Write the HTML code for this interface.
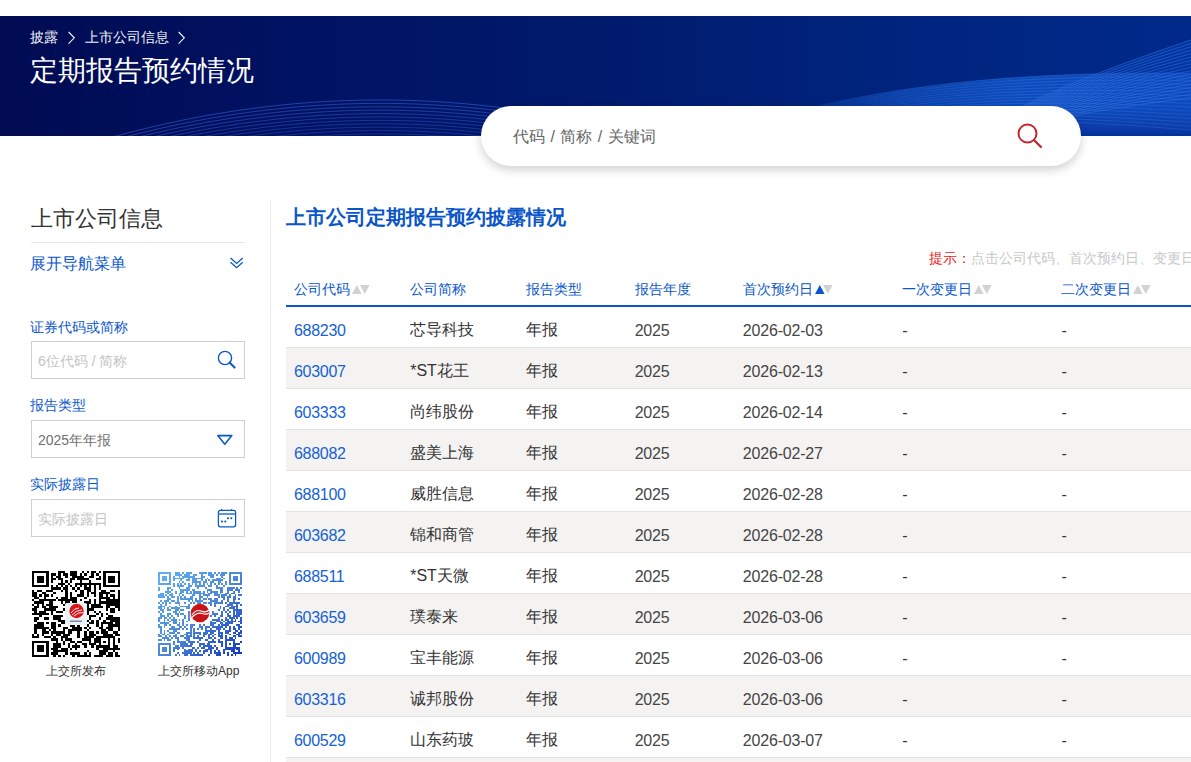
<!DOCTYPE html>
<html><head><meta charset="utf-8">
<style>
*{margin:0;padding:0;box-sizing:border-box}
html,body{width:1191px;height:762px;overflow:hidden;background:#fff}
body{font-family:"Liberation Sans",sans-serif;position:relative;color:#333}
.abs{position:absolute;white-space:nowrap}
#banner{position:absolute;left:0;top:16px;width:1191px;height:120px;overflow:hidden;
 background:linear-gradient(90deg,#000b52 0%,#001262 25%,#001a6c 50%,#00247e 75%,#00298a 100%)}
#banner svg{position:absolute;left:0;top:0}
.bc{color:#f0f0f5;font-size:14px;top:11px;left:30px;line-height:20px}
.ttl{color:#fff;font-size:28px;top:37px;left:30px;line-height:36px}
#search{position:absolute;left:481px;top:106px;width:600px;height:60px;border-radius:30px;background:#fff;
 box-shadow:0 4px 10px rgba(0,0,0,0.18)}
#search .ph{position:absolute;left:32px;top:20px;font-size:16px;line-height:22px;color:#666;word-spacing:1px}
.side-h{left:31px;top:203px;font-size:22px;line-height:32px;color:#333}
.hr1{position:absolute;left:31px;top:242px;width:214px;height:1px;background:#e6e6ee}
.nav{left:30px;top:253px;font-size:16px;line-height:22px;color:#0a57cc}
.lbl{left:30px;font-size:14px;line-height:20px;color:#0a57cc}
.box{position:absolute;left:31px;width:214px;height:38px;border:1px solid #cfcfcf;background:#fff}
.box .t{position:absolute;left:6px;top:9px;font-size:14px;line-height:20px;color:#c4c4c4;white-space:nowrap}
.qrl{font-size:12px;line-height:16px;color:#333;top:663px}
.vline{position:absolute;left:270px;top:201px;width:1px;height:561px;background:#ececf0}
.ctitle{left:286px;top:203px;font-size:20px;line-height:28px;color:#0a55c8;font-weight:bold}
.hint{left:929px;top:248px;font-size:14px;line-height:20px;color:#c8c8c8}
.hint b{color:#f41414;font-weight:normal}
table{position:absolute;left:286px;top:271px;border-collapse:collapse;width:1000px;table-layout:fixed}
th{height:35px;font-weight:normal;text-align:left;font-size:14px;color:#0a57cc;padding-left:8px;padding-top:4px;border-bottom:2px solid #0a55c8;vertical-align:middle;white-space:nowrap}
td{height:41px;font-size:16px;color:#333;padding-left:8px;padding-top:8px;border-bottom:1px solid #e4e4e4;white-space:nowrap}
tr.g td{background:#f4f3f2}
.code{color:#1662d4;letter-spacing:-0.3px}
td.c4,td.c5{letter-spacing:-0.2px;color:#454545}
.ar{margin-left:2px;vertical-align:0px}
.ar .on{color:#0a57cc}
</style></head><body>
<div id="banner">
<svg width="1191" height="120" viewBox="0 0 1191 120">
<defs>
<linearGradient id="bgB" x1="0" x2="0" y1="0.5" y2="1"><stop offset="0" stop-color="#0e4cbc"/><stop offset="1" stop-color="#04309a"/></linearGradient><linearGradient id="fadeB" gradientUnits="userSpaceOnUse" x1="790" x2="1020" y1="0" y2="0"><stop offset="0" stop-color="#fff" stop-opacity="0.15"/><stop offset="0.5" stop-color="#fff" stop-opacity="0.7"/><stop offset="1" stop-color="#fff" stop-opacity="1"/></linearGradient><mask id="mB" maskUnits="userSpaceOnUse" x="0" y="0" width="1191" height="120"><rect x="0" y="0" width="1191" height="120" fill="url(#fadeB)"/></mask><filter id="bl" x="-5%" y="-20%" width="110%" height="140%"><feGaussianBlur stdDeviation="0.7"/></filter>
<linearGradient id="bgC" x1="0" x2="0" y1="0.2" y2="1"><stop offset="0" stop-color="#0c46c0" stop-opacity="0.45"/><stop offset="1" stop-color="#0c46c0" stop-opacity="0.0"/></linearGradient>
</defs>
<path d="M100.0 124.6 L108.0 122.3 L116.0 120.1 L124.0 117.9 L132.0 115.8 L140.0 113.8 L148.0 111.9 L156.0 110.0 L164.0 108.2 L172.0 106.4 L180.0 104.7 L188.0 103.1 L196.0 101.5 L204.0 100.0 L212.0 98.6 L220.0 97.3 L228.0 96.0 L236.0 94.7 L244.0 93.6 L252.0 92.5 L260.0 91.5 L268.0 90.5 L276.0 89.6 L284.0 88.8 L292.0 88.0 L300.0 87.3 L308.0 86.7 L316.0 86.1 L324.0 85.6 L332.0 85.2 L340.0 84.8 L348.0 84.5 L356.0 84.3 L364.0 84.1 L372.0 84.0 L380.0 84.0 L388.0 84.0 L396.0 84.1 L404.0 84.3 L412.0 84.5 L420.0 84.8 L428.0 85.2 L436.0 85.6 L444.0 86.1 L452.0 86.7 L460.0 87.3 L468.0 88.0 L476.0 88.8 L484.0 89.6 L492.0 90.5 L500.0 91.5 L508.0 92.5 L516.0 93.6 L524.0 94.7 L532.0 96.0 L540.0 97.3 L548.0 98.6 L556.0 100.0 L564.0 101.5 L572.0 103.1 L580.0 104.7 L588.0 106.4 L596.0 108.2 L604.0 110.0 L612.0 111.9 L620.0 113.8 L628.0 115.8 L636.0 117.9 L644.0 120.1 L652.0 122.3 L660.0 124.6 L668.0 126.9 L676.0 129.4 L684.0 131.8 L692.0 134.4 L700.0 137.0 L708.0 139.7 L716.0 142.5 L724.0 145.3 L732.0 148.2 L740.0 151.1 L748.0 154.1 L756.0 157.2 L764.0 160.3 L772.0 163.6 L780.0 166.8 L788.0 170.2 L796.0 173.6 L804.0 177.1 L812.0 180.6" stroke="#3a6ae8" stroke-opacity="0.60" stroke-width="0.9" fill="none"/>
<path d="M100.0 128.0 L108.0 125.7 L116.0 123.5 L124.0 121.3 L132.0 119.2 L140.0 117.2 L148.0 115.3 L156.0 113.4 L164.0 111.6 L172.0 109.8 L180.0 108.1 L188.0 106.5 L196.0 104.9 L204.0 103.4 L212.0 102.0 L220.0 100.7 L228.0 99.4 L236.0 98.1 L244.0 97.0 L252.0 95.9 L260.0 94.9 L268.0 93.9 L276.0 93.0 L284.0 92.2 L292.0 91.4 L300.0 90.7 L308.0 90.1 L316.0 89.5 L324.0 89.0 L332.0 88.6 L340.0 88.2 L348.0 87.9 L356.0 87.7 L364.0 87.5 L372.0 87.4 L380.0 87.4 L388.0 87.4 L396.0 87.5 L404.0 87.7 L412.0 87.9 L420.0 88.2 L428.0 88.6 L436.0 89.0 L444.0 89.5 L452.0 90.1 L460.0 90.7 L468.0 91.4 L476.0 92.2 L484.0 93.0 L492.0 93.9 L500.0 94.9 L508.0 95.9 L516.0 97.0 L524.0 98.1 L532.0 99.4 L540.0 100.7 L548.0 102.0 L556.0 103.4 L564.0 104.9 L572.0 106.5 L580.0 108.1 L588.0 109.8 L596.0 111.6 L604.0 113.4 L612.0 115.3 L620.0 117.2 L628.0 119.2 L636.0 121.3 L644.0 123.5 L652.0 125.7 L660.0 128.0 L668.0 130.3 L676.0 132.8 L684.0 135.2 L692.0 137.8 L700.0 140.4 L708.0 143.1 L716.0 145.9 L724.0 148.7 L732.0 151.6 L740.0 154.5 L748.0 157.5 L756.0 160.6 L764.0 163.7 L772.0 167.0 L780.0 170.2 L788.0 173.6 L796.0 177.0 L804.0 180.5 L812.0 184.0" stroke="#3a6ae8" stroke-opacity="0.57" stroke-width="0.9" fill="none"/>
<path d="M100.0 131.4 L108.0 129.1 L116.0 126.9 L124.0 124.7 L132.0 122.6 L140.0 120.6 L148.0 118.7 L156.0 116.8 L164.0 115.0 L172.0 113.2 L180.0 111.5 L188.0 109.9 L196.0 108.3 L204.0 106.8 L212.0 105.4 L220.0 104.1 L228.0 102.8 L236.0 101.5 L244.0 100.4 L252.0 99.3 L260.0 98.3 L268.0 97.3 L276.0 96.4 L284.0 95.6 L292.0 94.8 L300.0 94.1 L308.0 93.5 L316.0 92.9 L324.0 92.4 L332.0 92.0 L340.0 91.6 L348.0 91.3 L356.0 91.1 L364.0 90.9 L372.0 90.8 L380.0 90.8 L388.0 90.8 L396.0 90.9 L404.0 91.1 L412.0 91.3 L420.0 91.6 L428.0 92.0 L436.0 92.4 L444.0 92.9 L452.0 93.5 L460.0 94.1 L468.0 94.8 L476.0 95.6 L484.0 96.4 L492.0 97.3 L500.0 98.3 L508.0 99.3 L516.0 100.4 L524.0 101.5 L532.0 102.8 L540.0 104.1 L548.0 105.4 L556.0 106.8 L564.0 108.3 L572.0 109.9 L580.0 111.5 L588.0 113.2 L596.0 115.0 L604.0 116.8 L612.0 118.7 L620.0 120.6 L628.0 122.6 L636.0 124.7 L644.0 126.9 L652.0 129.1 L660.0 131.4 L668.0 133.7 L676.0 136.2 L684.0 138.6 L692.0 141.2 L700.0 143.8 L708.0 146.5 L716.0 149.3 L724.0 152.1 L732.0 155.0 L740.0 157.9 L748.0 160.9 L756.0 164.0 L764.0 167.1 L772.0 170.4 L780.0 173.6 L788.0 177.0 L796.0 180.4 L804.0 183.9 L812.0 187.4" stroke="#3a6ae8" stroke-opacity="0.55" stroke-width="0.9" fill="none"/>
<path d="M100.0 134.8 L108.0 132.5 L116.0 130.3 L124.0 128.1 L132.0 126.0 L140.0 124.0 L148.0 122.1 L156.0 120.2 L164.0 118.4 L172.0 116.6 L180.0 114.9 L188.0 113.3 L196.0 111.7 L204.0 110.2 L212.0 108.8 L220.0 107.5 L228.0 106.2 L236.0 104.9 L244.0 103.8 L252.0 102.7 L260.0 101.7 L268.0 100.7 L276.0 99.8 L284.0 99.0 L292.0 98.2 L300.0 97.5 L308.0 96.9 L316.0 96.3 L324.0 95.8 L332.0 95.4 L340.0 95.0 L348.0 94.7 L356.0 94.5 L364.0 94.3 L372.0 94.2 L380.0 94.2 L388.0 94.2 L396.0 94.3 L404.0 94.5 L412.0 94.7 L420.0 95.0 L428.0 95.4 L436.0 95.8 L444.0 96.3 L452.0 96.9 L460.0 97.5 L468.0 98.2 L476.0 99.0 L484.0 99.8 L492.0 100.7 L500.0 101.7 L508.0 102.7 L516.0 103.8 L524.0 104.9 L532.0 106.2 L540.0 107.5 L548.0 108.8 L556.0 110.2 L564.0 111.7 L572.0 113.3 L580.0 114.9 L588.0 116.6 L596.0 118.4 L604.0 120.2 L612.0 122.1 L620.0 124.0 L628.0 126.0 L636.0 128.1 L644.0 130.3 L652.0 132.5 L660.0 134.8 L668.0 137.1 L676.0 139.6 L684.0 142.0 L692.0 144.6 L700.0 147.2 L708.0 149.9 L716.0 152.7 L724.0 155.5 L732.0 158.4 L740.0 161.3 L748.0 164.3 L756.0 167.4 L764.0 170.5 L772.0 173.8 L780.0 177.0 L788.0 180.4 L796.0 183.8 L804.0 187.3 L812.0 190.8" stroke="#3a6ae8" stroke-opacity="0.53" stroke-width="0.9" fill="none"/>
<path d="M100.0 138.2 L108.0 135.9 L116.0 133.7 L124.0 131.5 L132.0 129.4 L140.0 127.4 L148.0 125.5 L156.0 123.6 L164.0 121.8 L172.0 120.0 L180.0 118.3 L188.0 116.7 L196.0 115.1 L204.0 113.6 L212.0 112.2 L220.0 110.9 L228.0 109.6 L236.0 108.3 L244.0 107.2 L252.0 106.1 L260.0 105.1 L268.0 104.1 L276.0 103.2 L284.0 102.4 L292.0 101.6 L300.0 100.9 L308.0 100.3 L316.0 99.7 L324.0 99.2 L332.0 98.8 L340.0 98.4 L348.0 98.1 L356.0 97.9 L364.0 97.7 L372.0 97.6 L380.0 97.6 L388.0 97.6 L396.0 97.7 L404.0 97.9 L412.0 98.1 L420.0 98.4 L428.0 98.8 L436.0 99.2 L444.0 99.7 L452.0 100.3 L460.0 100.9 L468.0 101.6 L476.0 102.4 L484.0 103.2 L492.0 104.1 L500.0 105.1 L508.0 106.1 L516.0 107.2 L524.0 108.3 L532.0 109.6 L540.0 110.9 L548.0 112.2 L556.0 113.6 L564.0 115.1 L572.0 116.7 L580.0 118.3 L588.0 120.0 L596.0 121.8 L604.0 123.6 L612.0 125.5 L620.0 127.4 L628.0 129.4 L636.0 131.5 L644.0 133.7 L652.0 135.9 L660.0 138.2 L668.0 140.5 L676.0 143.0 L684.0 145.4 L692.0 148.0 L700.0 150.6 L708.0 153.3 L716.0 156.1 L724.0 158.9 L732.0 161.8 L740.0 164.7 L748.0 167.7 L756.0 170.8 L764.0 173.9 L772.0 177.2 L780.0 180.4 L788.0 183.8 L796.0 187.2 L804.0 190.7 L812.0 194.2" stroke="#3a6ae8" stroke-opacity="0.50" stroke-width="0.9" fill="none"/>
<path d="M100.0 141.6 L108.0 139.3 L116.0 137.1 L124.0 134.9 L132.0 132.8 L140.0 130.8 L148.0 128.9 L156.0 127.0 L164.0 125.2 L172.0 123.4 L180.0 121.7 L188.0 120.1 L196.0 118.5 L204.0 117.0 L212.0 115.6 L220.0 114.3 L228.0 113.0 L236.0 111.7 L244.0 110.6 L252.0 109.5 L260.0 108.5 L268.0 107.5 L276.0 106.6 L284.0 105.8 L292.0 105.0 L300.0 104.3 L308.0 103.7 L316.0 103.1 L324.0 102.6 L332.0 102.2 L340.0 101.8 L348.0 101.5 L356.0 101.3 L364.0 101.1 L372.0 101.0 L380.0 101.0 L388.0 101.0 L396.0 101.1 L404.0 101.3 L412.0 101.5 L420.0 101.8 L428.0 102.2 L436.0 102.6 L444.0 103.1 L452.0 103.7 L460.0 104.3 L468.0 105.0 L476.0 105.8 L484.0 106.6 L492.0 107.5 L500.0 108.5 L508.0 109.5 L516.0 110.6 L524.0 111.7 L532.0 113.0 L540.0 114.3 L548.0 115.6 L556.0 117.0 L564.0 118.5 L572.0 120.1 L580.0 121.7 L588.0 123.4 L596.0 125.2 L604.0 127.0 L612.0 128.9 L620.0 130.8 L628.0 132.8 L636.0 134.9 L644.0 137.1 L652.0 139.3 L660.0 141.6 L668.0 143.9 L676.0 146.4 L684.0 148.8 L692.0 151.4 L700.0 154.0 L708.0 156.7 L716.0 159.5 L724.0 162.3 L732.0 165.2 L740.0 168.1 L748.0 171.1 L756.0 174.2 L764.0 177.3 L772.0 180.6 L780.0 183.8 L788.0 187.2 L796.0 190.6 L804.0 194.1 L812.0 197.6" stroke="#3a6ae8" stroke-opacity="0.47" stroke-width="0.9" fill="none"/>
<path d="M100.0 145.0 L108.0 142.7 L116.0 140.5 L124.0 138.3 L132.0 136.2 L140.0 134.2 L148.0 132.3 L156.0 130.4 L164.0 128.6 L172.0 126.8 L180.0 125.1 L188.0 123.5 L196.0 121.9 L204.0 120.4 L212.0 119.0 L220.0 117.7 L228.0 116.4 L236.0 115.1 L244.0 114.0 L252.0 112.9 L260.0 111.9 L268.0 110.9 L276.0 110.0 L284.0 109.2 L292.0 108.4 L300.0 107.7 L308.0 107.1 L316.0 106.5 L324.0 106.0 L332.0 105.6 L340.0 105.2 L348.0 104.9 L356.0 104.7 L364.0 104.5 L372.0 104.4 L380.0 104.4 L388.0 104.4 L396.0 104.5 L404.0 104.7 L412.0 104.9 L420.0 105.2 L428.0 105.6 L436.0 106.0 L444.0 106.5 L452.0 107.1 L460.0 107.7 L468.0 108.4 L476.0 109.2 L484.0 110.0 L492.0 110.9 L500.0 111.9 L508.0 112.9 L516.0 114.0 L524.0 115.1 L532.0 116.4 L540.0 117.7 L548.0 119.0 L556.0 120.4 L564.0 121.9 L572.0 123.5 L580.0 125.1 L588.0 126.8 L596.0 128.6 L604.0 130.4 L612.0 132.3 L620.0 134.2 L628.0 136.2 L636.0 138.3 L644.0 140.5 L652.0 142.7 L660.0 145.0 L668.0 147.3 L676.0 149.8 L684.0 152.2 L692.0 154.8 L700.0 157.4 L708.0 160.1 L716.0 162.9 L724.0 165.7 L732.0 168.6 L740.0 171.5 L748.0 174.5 L756.0 177.6 L764.0 180.7 L772.0 184.0 L780.0 187.2 L788.0 190.6 L796.0 194.0 L804.0 197.5 L812.0 201.0" stroke="#3a6ae8" stroke-opacity="0.45" stroke-width="0.9" fill="none"/>
<path d="M100.0 148.4 L108.0 146.1 L116.0 143.9 L124.0 141.7 L132.0 139.6 L140.0 137.6 L148.0 135.7 L156.0 133.8 L164.0 132.0 L172.0 130.2 L180.0 128.5 L188.0 126.9 L196.0 125.3 L204.0 123.8 L212.0 122.4 L220.0 121.1 L228.0 119.8 L236.0 118.5 L244.0 117.4 L252.0 116.3 L260.0 115.3 L268.0 114.3 L276.0 113.4 L284.0 112.6 L292.0 111.8 L300.0 111.1 L308.0 110.5 L316.0 109.9 L324.0 109.4 L332.0 109.0 L340.0 108.6 L348.0 108.3 L356.0 108.1 L364.0 107.9 L372.0 107.8 L380.0 107.8 L388.0 107.8 L396.0 107.9 L404.0 108.1 L412.0 108.3 L420.0 108.6 L428.0 109.0 L436.0 109.4 L444.0 109.9 L452.0 110.5 L460.0 111.1 L468.0 111.8 L476.0 112.6 L484.0 113.4 L492.0 114.3 L500.0 115.3 L508.0 116.3 L516.0 117.4 L524.0 118.5 L532.0 119.8 L540.0 121.1 L548.0 122.4 L556.0 123.8 L564.0 125.3 L572.0 126.9 L580.0 128.5 L588.0 130.2 L596.0 132.0 L604.0 133.8 L612.0 135.7 L620.0 137.6 L628.0 139.6 L636.0 141.7 L644.0 143.9 L652.0 146.1 L660.0 148.4 L668.0 150.7 L676.0 153.2 L684.0 155.6 L692.0 158.2 L700.0 160.8 L708.0 163.5 L716.0 166.3 L724.0 169.1 L732.0 172.0 L740.0 174.9 L748.0 177.9 L756.0 181.0 L764.0 184.1 L772.0 187.4 L780.0 190.6 L788.0 194.0 L796.0 197.4 L804.0 200.9 L812.0 204.4" stroke="#3a6ae8" stroke-opacity="0.42" stroke-width="0.9" fill="none"/>
<path d="M100.0 151.8 L108.0 149.5 L116.0 147.3 L124.0 145.1 L132.0 143.0 L140.0 141.0 L148.0 139.1 L156.0 137.2 L164.0 135.4 L172.0 133.6 L180.0 131.9 L188.0 130.3 L196.0 128.7 L204.0 127.2 L212.0 125.8 L220.0 124.5 L228.0 123.2 L236.0 121.9 L244.0 120.8 L252.0 119.7 L260.0 118.7 L268.0 117.7 L276.0 116.8 L284.0 116.0 L292.0 115.2 L300.0 114.5 L308.0 113.9 L316.0 113.3 L324.0 112.8 L332.0 112.4 L340.0 112.0 L348.0 111.7 L356.0 111.5 L364.0 111.3 L372.0 111.2 L380.0 111.2 L388.0 111.2 L396.0 111.3 L404.0 111.5 L412.0 111.7 L420.0 112.0 L428.0 112.4 L436.0 112.8 L444.0 113.3 L452.0 113.9 L460.0 114.5 L468.0 115.2 L476.0 116.0 L484.0 116.8 L492.0 117.7 L500.0 118.7 L508.0 119.7 L516.0 120.8 L524.0 121.9 L532.0 123.2 L540.0 124.5 L548.0 125.8 L556.0 127.2 L564.0 128.7 L572.0 130.3 L580.0 131.9 L588.0 133.6 L596.0 135.4 L604.0 137.2 L612.0 139.1 L620.0 141.0 L628.0 143.0 L636.0 145.1 L644.0 147.3 L652.0 149.5 L660.0 151.8 L668.0 154.1 L676.0 156.6 L684.0 159.0 L692.0 161.6 L700.0 164.2 L708.0 166.9 L716.0 169.7 L724.0 172.5 L732.0 175.4 L740.0 178.3 L748.0 181.3 L756.0 184.4 L764.0 187.5 L772.0 190.8 L780.0 194.0 L788.0 197.4 L796.0 200.8 L804.0 204.3 L812.0 207.8" stroke="#3a6ae8" stroke-opacity="0.40" stroke-width="0.9" fill="none"/>
<path d="M100.0 155.2 L108.0 152.9 L116.0 150.7 L124.0 148.5 L132.0 146.4 L140.0 144.4 L148.0 142.5 L156.0 140.6 L164.0 138.8 L172.0 137.0 L180.0 135.3 L188.0 133.7 L196.0 132.1 L204.0 130.6 L212.0 129.2 L220.0 127.9 L228.0 126.6 L236.0 125.3 L244.0 124.2 L252.0 123.1 L260.0 122.1 L268.0 121.1 L276.0 120.2 L284.0 119.4 L292.0 118.6 L300.0 117.9 L308.0 117.3 L316.0 116.7 L324.0 116.2 L332.0 115.8 L340.0 115.4 L348.0 115.1 L356.0 114.9 L364.0 114.7 L372.0 114.6 L380.0 114.6 L388.0 114.6 L396.0 114.7 L404.0 114.9 L412.0 115.1 L420.0 115.4 L428.0 115.8 L436.0 116.2 L444.0 116.7 L452.0 117.3 L460.0 117.9 L468.0 118.6 L476.0 119.4 L484.0 120.2 L492.0 121.1 L500.0 122.1 L508.0 123.1 L516.0 124.2 L524.0 125.3 L532.0 126.6 L540.0 127.9 L548.0 129.2 L556.0 130.6 L564.0 132.1 L572.0 133.7 L580.0 135.3 L588.0 137.0 L596.0 138.8 L604.0 140.6 L612.0 142.5 L620.0 144.4 L628.0 146.4 L636.0 148.5 L644.0 150.7 L652.0 152.9 L660.0 155.2 L668.0 157.5 L676.0 160.0 L684.0 162.4 L692.0 165.0 L700.0 167.6 L708.0 170.3 L716.0 173.1 L724.0 175.9 L732.0 178.8 L740.0 181.7 L748.0 184.7 L756.0 187.8 L764.0 190.9 L772.0 194.2 L780.0 197.4 L788.0 200.8 L796.0 204.2 L804.0 207.7 L812.0 211.2" stroke="#3a6ae8" stroke-opacity="0.38" stroke-width="0.9" fill="none"/>
<path d="M100.0 158.6 L108.0 156.3 L116.0 154.1 L124.0 151.9 L132.0 149.8 L140.0 147.8 L148.0 145.9 L156.0 144.0 L164.0 142.2 L172.0 140.4 L180.0 138.7 L188.0 137.1 L196.0 135.5 L204.0 134.0 L212.0 132.6 L220.0 131.3 L228.0 130.0 L236.0 128.7 L244.0 127.6 L252.0 126.5 L260.0 125.5 L268.0 124.5 L276.0 123.6 L284.0 122.8 L292.0 122.0 L300.0 121.3 L308.0 120.7 L316.0 120.1 L324.0 119.6 L332.0 119.2 L340.0 118.8 L348.0 118.5 L356.0 118.3 L364.0 118.1 L372.0 118.0 L380.0 118.0 L388.0 118.0 L396.0 118.1 L404.0 118.3 L412.0 118.5 L420.0 118.8 L428.0 119.2 L436.0 119.6 L444.0 120.1 L452.0 120.7 L460.0 121.3 L468.0 122.0 L476.0 122.8 L484.0 123.6 L492.0 124.5 L500.0 125.5 L508.0 126.5 L516.0 127.6 L524.0 128.7 L532.0 130.0 L540.0 131.3 L548.0 132.6 L556.0 134.0 L564.0 135.5 L572.0 137.1 L580.0 138.7 L588.0 140.4 L596.0 142.2 L604.0 144.0 L612.0 145.9 L620.0 147.8 L628.0 149.8 L636.0 151.9 L644.0 154.1 L652.0 156.3 L660.0 158.6 L668.0 160.9 L676.0 163.4 L684.0 165.8 L692.0 168.4 L700.0 171.0 L708.0 173.7 L716.0 176.5 L724.0 179.3 L732.0 182.2 L740.0 185.1 L748.0 188.1 L756.0 191.2 L764.0 194.3 L772.0 197.6 L780.0 200.8 L788.0 204.2 L796.0 207.6 L804.0 211.1 L812.0 214.6" stroke="#3a6ae8" stroke-opacity="0.35" stroke-width="0.9" fill="none"/>
<g filter="url(#bl)"><g mask="url(#mB)"><path d="M690.0 124.0 L696.0 124.0 L702.0 123.3 L708.0 121.2 L714.0 119.1 L720.0 117.1 L726.0 115.2 L732.0 113.2 L738.0 111.3 L744.0 109.5 L750.0 107.7 L756.0 105.9 L762.0 104.2 L768.0 102.5 L774.0 100.8 L780.0 99.2 L786.0 97.6 L792.0 96.1 L798.0 94.6 L804.0 93.1 L810.0 91.6 L816.0 90.2 L822.0 88.9 L828.0 87.6 L834.0 86.3 L840.0 85.0 L846.0 83.8 L852.0 82.6 L858.0 81.4 L864.0 80.3 L870.0 79.2 L876.0 78.1 L882.0 77.1 L888.0 76.1 L894.0 75.1 L900.0 74.2 L906.0 73.3 L912.0 72.4 L918.0 71.6 L924.0 70.7 L930.0 70.0 L936.0 69.2 L942.0 68.5 L948.0 67.8 L954.0 67.1 L960.0 66.4 L966.0 65.8 L972.0 65.2 L978.0 64.6 L984.0 64.1 L990.0 63.6 L996.0 63.1 L1002.0 62.6 L1008.0 62.1 L1014.0 61.7 L1020.0 61.3 L1026.0 60.9 L1032.0 60.6 L1038.0 60.2 L1044.0 59.9 L1050.0 59.6 L1056.0 59.3 L1062.0 59.1 L1068.0 58.8 L1074.0 58.6 L1080.0 58.4 L1086.0 58.2 L1092.0 58.0 L1098.0 57.9 L1104.0 57.7 L1110.0 57.6 L1116.0 57.5 L1122.0 57.4 L1128.0 57.3 L1134.0 57.2 L1140.0 57.2 L1146.0 57.1 L1152.0 57.1 L1158.0 57.1 L1164.0 57.0 L1170.0 57.0 L1176.0 57.0 L1182.0 57.0 L1188.0 57.0 L1191.0 57.0 L1191 120 L690 120Z" fill="url(#bgB)"/>
<path d="M690.0 124.0 L696.0 124.0 L702.0 123.3 L708.0 121.2 L714.0 119.1 L720.0 117.1 L726.0 115.2 L732.0 113.2 L738.0 111.3 L744.0 109.5 L750.0 107.7 L756.0 105.9 L762.0 104.2 L768.0 102.5 L774.0 100.8 L780.0 99.2 L786.0 97.6 L792.0 96.1 L798.0 94.6 L804.0 93.1 L810.0 91.6 L816.0 90.2 L822.0 88.9 L828.0 87.6 L834.0 86.3 L840.0 85.0 L846.0 83.8 L852.0 82.6 L858.0 81.4 L864.0 80.3 L870.0 79.2 L876.0 78.1 L882.0 77.1 L888.0 76.1 L894.0 75.1 L900.0 74.2 L906.0 73.3 L912.0 72.4 L918.0 71.6 L924.0 70.7 L930.0 70.0 L936.0 69.2 L942.0 68.5 L948.0 67.8 L954.0 67.1 L960.0 66.4 L966.0 65.8 L972.0 65.2 L978.0 64.6 L984.0 64.1 L990.0 63.6 L996.0 63.1 L1002.0 62.6 L1008.0 62.1 L1014.0 61.7 L1020.0 61.3 L1026.0 60.9 L1032.0 60.6 L1038.0 60.2 L1044.0 59.9 L1050.0 59.6 L1056.0 59.3 L1062.0 59.1 L1068.0 58.8 L1074.0 58.6 L1080.0 58.4 L1086.0 58.2 L1092.0 58.0 L1098.0 57.9 L1104.0 57.7 L1110.0 57.6 L1116.0 57.5 L1122.0 57.4 L1128.0 57.3 L1134.0 57.2 L1140.0 57.2 L1146.0 57.1 L1152.0 57.1 L1158.0 57.1 L1164.0 57.0 L1170.0 57.0 L1176.0 57.0 L1182.0 57.0 L1188.0 57.0 L1191.0 57.0" stroke="#4a88f0" stroke-opacity="0.38" stroke-width="0.8" fill="none"/>
<path d="M690.0 125.2 L696.0 125.2 L702.0 124.5 L708.0 122.4 L714.0 120.4 L720.0 118.4 L726.0 116.5 L732.0 114.6 L738.0 112.7 L744.0 110.9 L750.0 109.1 L756.0 107.4 L762.0 105.7 L768.0 104.0 L774.0 102.4 L780.0 100.8 L786.0 99.3 L792.0 97.8 L798.0 96.3 L804.0 94.8 L810.0 93.4 L816.0 92.1 L822.0 90.7 L828.0 89.4 L834.0 88.2 L840.0 86.9 L846.0 85.7 L852.0 84.6 L858.0 83.4 L864.0 82.4 L870.0 81.3 L876.0 80.3 L882.0 79.3 L888.0 78.3 L894.0 77.4 L900.0 76.5 L906.0 75.6 L912.0 74.7 L918.0 73.9 L924.0 73.1 L930.0 72.4 L936.0 71.6 L942.0 70.9 L948.0 70.3 L954.0 69.6 L960.0 69.0 L966.0 68.4 L972.0 67.9 L978.0 67.3 L984.0 66.8 L990.0 66.3 L996.0 65.8 L1002.0 65.4 L1008.0 65.0 L1014.0 64.6 L1020.0 64.2 L1026.0 63.9 L1032.0 63.5 L1038.0 63.2 L1044.0 62.9 L1050.0 62.7 L1056.0 62.4 L1062.0 62.2 L1068.0 62.0 L1074.0 61.8 L1080.0 61.6 L1086.0 61.5 L1092.0 61.3 L1098.0 61.2 L1104.0 61.1 L1110.0 61.0 L1116.0 60.9 L1122.0 60.8 L1128.0 60.8 L1134.0 60.7 L1140.0 60.7 L1146.0 60.7 L1152.0 60.7 L1158.0 60.7 L1164.0 60.7 L1170.0 60.7 L1176.0 60.7 L1182.0 60.8 L1188.0 60.8 L1191.0 60.8" stroke="#4a88f0" stroke-opacity="0.38" stroke-width="0.8" fill="none"/>
<path d="M690.0 126.4 L696.0 126.4 L702.0 125.7 L708.0 123.7 L714.0 121.7 L720.0 119.7 L726.0 117.8 L732.0 116.0 L738.0 114.1 L744.0 112.4 L750.0 110.6 L756.0 108.9 L762.0 107.2 L768.0 105.6 L774.0 104.0 L780.0 102.4 L786.0 100.9 L792.0 99.4 L798.0 98.0 L804.0 96.6 L810.0 95.2 L816.0 93.9 L822.0 92.6 L828.0 91.3 L834.0 90.1 L840.0 88.9 L846.0 87.7 L852.0 86.6 L858.0 85.5 L864.0 84.4 L870.0 83.4 L876.0 82.4 L882.0 81.4 L888.0 80.5 L894.0 79.6 L900.0 78.7 L906.0 77.9 L912.0 77.1 L918.0 76.3 L924.0 75.5 L930.0 74.8 L936.0 74.1 L942.0 73.4 L948.0 72.8 L954.0 72.2 L960.0 71.6 L966.0 71.0 L972.0 70.5 L978.0 70.0 L984.0 69.5 L990.0 69.0 L996.0 68.6 L1002.0 68.2 L1008.0 67.8 L1014.0 67.4 L1020.0 67.1 L1026.0 66.8 L1032.0 66.5 L1038.0 66.2 L1044.0 66.0 L1050.0 65.7 L1056.0 65.5 L1062.0 65.3 L1068.0 65.1 L1074.0 65.0 L1080.0 64.8 L1086.0 64.7 L1092.0 64.6 L1098.0 64.5 L1104.0 64.4 L1110.0 64.4 L1116.0 64.3 L1122.0 64.3 L1128.0 64.3 L1134.0 64.2 L1140.0 64.2 L1146.0 64.3 L1152.0 64.3 L1158.0 64.3 L1164.0 64.3 L1170.0 64.4 L1176.0 64.4 L1182.0 64.5 L1188.0 64.6 L1191.0 64.6" stroke="#4a88f0" stroke-opacity="0.38" stroke-width="0.8" fill="none"/>
<path d="M690.0 127.6 L696.0 127.6 L702.0 126.9 L708.0 124.9 L714.0 123.0 L720.0 121.1 L726.0 119.2 L732.0 117.3 L738.0 115.5 L744.0 113.8 L750.0 112.1 L756.0 110.4 L762.0 108.8 L768.0 107.2 L774.0 105.6 L780.0 104.1 L786.0 102.6 L792.0 101.1 L798.0 99.7 L804.0 98.3 L810.0 97.0 L816.0 95.7 L822.0 94.4 L828.0 93.2 L834.0 92.0 L840.0 90.8 L846.0 89.7 L852.0 88.6 L858.0 87.5 L864.0 86.5 L870.0 85.5 L876.0 84.5 L882.0 83.6 L888.0 82.7 L894.0 81.8 L900.0 81.0 L906.0 80.2 L912.0 79.4 L918.0 78.6 L924.0 77.9 L930.0 77.2 L936.0 76.5 L942.0 75.9 L948.0 75.3 L954.0 74.7 L960.0 74.2 L966.0 73.6 L972.0 73.1 L978.0 72.7 L984.0 72.2 L990.0 71.8 L996.0 71.4 L1002.0 71.0 L1008.0 70.6 L1014.0 70.3 L1020.0 70.0 L1026.0 69.7 L1032.0 69.4 L1038.0 69.2 L1044.0 69.0 L1050.0 68.8 L1056.0 68.6 L1062.0 68.4 L1068.0 68.3 L1074.0 68.2 L1080.0 68.0 L1086.0 67.9 L1092.0 67.9 L1098.0 67.8 L1104.0 67.8 L1110.0 67.7 L1116.0 67.7 L1122.0 67.7 L1128.0 67.7 L1134.0 67.7 L1140.0 67.8 L1146.0 67.8 L1152.0 67.9 L1158.0 67.9 L1164.0 68.0 L1170.0 68.1 L1176.0 68.2 L1182.0 68.3 L1188.0 68.4 L1191.0 68.4" stroke="#4a88f0" stroke-opacity="0.38" stroke-width="0.8" fill="none"/>
<path d="M690.0 128.8 L696.0 128.8 L702.0 128.1 L708.0 126.2 L714.0 124.2 L720.0 122.4 L726.0 120.5 L732.0 118.7 L738.0 116.9 L744.0 115.2 L750.0 113.5 L756.0 111.9 L762.0 110.3 L768.0 108.7 L774.0 107.2 L780.0 105.7 L786.0 104.2 L792.0 102.8 L798.0 101.4 L804.0 100.1 L810.0 98.8 L816.0 97.5 L822.0 96.3 L828.0 95.1 L834.0 93.9 L840.0 92.8 L846.0 91.7 L852.0 90.6 L858.0 89.6 L864.0 88.6 L870.0 87.6 L876.0 86.7 L882.0 85.8 L888.0 84.9 L894.0 84.0 L900.0 83.2 L906.0 82.5 L912.0 81.7 L918.0 81.0 L924.0 80.3 L930.0 79.6 L936.0 79.0 L942.0 78.4 L948.0 77.8 L954.0 77.3 L960.0 76.7 L966.0 76.2 L972.0 75.8 L978.0 75.3 L984.0 74.9 L990.0 74.5 L996.0 74.1 L1002.0 73.8 L1008.0 73.5 L1014.0 73.2 L1020.0 72.9 L1026.0 72.6 L1032.0 72.4 L1038.0 72.2 L1044.0 72.0 L1050.0 71.8 L1056.0 71.7 L1062.0 71.5 L1068.0 71.4 L1074.0 71.3 L1080.0 71.3 L1086.0 71.2 L1092.0 71.1 L1098.0 71.1 L1104.0 71.1 L1110.0 71.1 L1116.0 71.1 L1122.0 71.1 L1128.0 71.2 L1134.0 71.2 L1140.0 71.3 L1146.0 71.4 L1152.0 71.5 L1158.0 71.6 L1164.0 71.7 L1170.0 71.8 L1176.0 71.9 L1182.0 72.0 L1188.0 72.1 L1191.0 72.2" stroke="#4a88f0" stroke-opacity="0.38" stroke-width="0.8" fill="none"/>
<path d="M690.0 130.0 L696.0 130.0 L702.0 129.3 L708.0 127.4 L714.0 125.5 L720.0 123.7 L726.0 121.9 L732.0 120.1 L738.0 118.3 L744.0 116.7 L750.0 115.0 L756.0 113.4 L762.0 111.8 L768.0 110.3 L774.0 108.8 L780.0 107.3 L786.0 105.9 L792.0 104.5 L798.0 103.2 L804.0 101.8 L810.0 100.6 L816.0 99.3 L822.0 98.1 L828.0 96.9 L834.0 95.8 L840.0 94.7 L846.0 93.6 L852.0 92.6 L858.0 91.6 L864.0 90.6 L870.0 89.7 L876.0 88.8 L882.0 87.9 L888.0 87.1 L894.0 86.3 L900.0 85.5 L906.0 84.7 L912.0 84.0 L918.0 83.3 L924.0 82.7 L930.0 82.0 L936.0 81.4 L942.0 80.9 L948.0 80.3 L954.0 79.8 L960.0 79.3 L966.0 78.9 L972.0 78.4 L978.0 78.0 L984.0 77.6 L990.0 77.2 L996.0 76.9 L1002.0 76.6 L1008.0 76.3 L1014.0 76.0 L1020.0 75.8 L1026.0 75.6 L1032.0 75.4 L1038.0 75.2 L1044.0 75.0 L1050.0 74.9 L1056.0 74.8 L1062.0 74.7 L1068.0 74.6 L1074.0 74.5 L1080.0 74.5 L1086.0 74.4 L1092.0 74.4 L1098.0 74.4 L1104.0 74.4 L1110.0 74.5 L1116.0 74.5 L1122.0 74.6 L1128.0 74.7 L1134.0 74.7 L1140.0 74.8 L1146.0 74.9 L1152.0 75.1 L1158.0 75.2 L1164.0 75.3 L1170.0 75.5 L1176.0 75.6 L1182.0 75.8 L1188.0 75.9 L1191.0 76.0" stroke="#4a88f0" stroke-opacity="0.38" stroke-width="0.8" fill="none"/>
<path d="M690.0 131.2 L696.0 131.2 L702.0 130.6 L708.0 128.7 L714.0 126.8 L720.0 125.0 L726.0 123.2 L732.0 121.4 L738.0 119.7 L744.0 118.1 L750.0 116.5 L756.0 114.9 L762.0 113.3 L768.0 111.8 L774.0 110.4 L780.0 108.9 L786.0 107.5 L792.0 106.2 L798.0 104.9 L804.0 103.6 L810.0 102.3 L816.0 101.1 L822.0 100.0 L828.0 98.8 L834.0 97.7 L840.0 96.6 L846.0 95.6 L852.0 94.6 L858.0 93.6 L864.0 92.7 L870.0 91.8 L876.0 90.9 L882.0 90.1 L888.0 89.3 L894.0 88.5 L900.0 87.7 L906.0 87.0 L912.0 86.3 L918.0 85.7 L924.0 85.1 L930.0 84.5 L936.0 83.9 L942.0 83.4 L948.0 82.8 L954.0 82.4 L960.0 81.9 L966.0 81.5 L972.0 81.1 L978.0 80.7 L984.0 80.3 L990.0 80.0 L996.0 79.7 L1002.0 79.4 L1008.0 79.1 L1014.0 78.9 L1020.0 78.7 L1026.0 78.5 L1032.0 78.3 L1038.0 78.2 L1044.0 78.0 L1050.0 77.9 L1056.0 77.8 L1062.0 77.8 L1068.0 77.7 L1074.0 77.7 L1080.0 77.7 L1086.0 77.7 L1092.0 77.7 L1098.0 77.7 L1104.0 77.8 L1110.0 77.8 L1116.0 77.9 L1122.0 78.0 L1128.0 78.1 L1134.0 78.2 L1140.0 78.4 L1146.0 78.5 L1152.0 78.7 L1158.0 78.8 L1164.0 79.0 L1170.0 79.2 L1176.0 79.3 L1182.0 79.5 L1188.0 79.7 L1191.0 79.8" stroke="#4a88f0" stroke-opacity="0.38" stroke-width="0.8" fill="none"/>
<path d="M690.0 132.4 L696.0 132.4 L702.0 131.8 L708.0 129.9 L714.0 128.1 L720.0 126.3 L726.0 124.5 L732.0 122.8 L738.0 121.1 L744.0 119.5 L750.0 117.9 L756.0 116.4 L762.0 114.9 L768.0 113.4 L774.0 112.0 L780.0 110.6 L786.0 109.2 L792.0 107.9 L798.0 106.6 L804.0 105.3 L810.0 104.1 L816.0 102.9 L822.0 101.8 L828.0 100.7 L834.0 99.6 L840.0 98.6 L846.0 97.6 L852.0 96.6 L858.0 95.7 L864.0 94.8 L870.0 93.9 L876.0 93.1 L882.0 92.2 L888.0 91.5 L894.0 90.7 L900.0 90.0 L906.0 89.3 L912.0 88.7 L918.0 88.0 L924.0 87.4 L930.0 86.9 L936.0 86.3 L942.0 85.8 L948.0 85.4 L954.0 84.9 L960.0 84.5 L966.0 84.1 L972.0 83.7 L978.0 83.3 L984.0 83.0 L990.0 82.7 L996.0 82.4 L1002.0 82.2 L1008.0 82.0 L1014.0 81.8 L1020.0 81.6 L1026.0 81.4 L1032.0 81.3 L1038.0 81.2 L1044.0 81.1 L1050.0 81.0 L1056.0 80.9 L1062.0 80.9 L1068.0 80.9 L1074.0 80.9 L1080.0 80.9 L1086.0 80.9 L1092.0 81.0 L1098.0 81.0 L1104.0 81.1 L1110.0 81.2 L1116.0 81.3 L1122.0 81.4 L1128.0 81.6 L1134.0 81.7 L1140.0 81.9 L1146.0 82.1 L1152.0 82.2 L1158.0 82.4 L1164.0 82.6 L1170.0 82.8 L1176.0 83.1 L1182.0 83.3 L1188.0 83.5 L1191.0 83.6" stroke="#4a88f0" stroke-opacity="0.38" stroke-width="0.8" fill="none"/>
<path d="M690.0 133.6 L696.0 133.6 L702.0 133.0 L708.0 131.1 L714.0 129.3 L720.0 127.6 L726.0 125.9 L732.0 124.2 L738.0 122.5 L744.0 121.0 L750.0 119.4 L756.0 117.9 L762.0 116.4 L768.0 115.0 L774.0 113.5 L780.0 112.2 L786.0 110.9 L792.0 109.6 L798.0 108.3 L804.0 107.1 L810.0 105.9 L816.0 104.8 L822.0 103.6 L828.0 102.6 L834.0 101.5 L840.0 100.5 L846.0 99.6 L852.0 98.6 L858.0 97.7 L864.0 96.8 L870.0 96.0 L876.0 95.2 L882.0 94.4 L888.0 93.7 L894.0 92.9 L900.0 92.3 L906.0 91.6 L912.0 91.0 L918.0 90.4 L924.0 89.8 L930.0 89.3 L936.0 88.8 L942.0 88.3 L948.0 87.9 L954.0 87.4 L960.0 87.0 L966.0 86.7 L972.0 86.3 L978.0 86.0 L984.0 85.7 L990.0 85.5 L996.0 85.2 L1002.0 85.0 L1008.0 84.8 L1014.0 84.6 L1020.0 84.5 L1026.0 84.3 L1032.0 84.2 L1038.0 84.2 L1044.0 84.1 L1050.0 84.0 L1056.0 84.0 L1062.0 84.0 L1068.0 84.0 L1074.0 84.1 L1080.0 84.1 L1086.0 84.2 L1092.0 84.2 L1098.0 84.3 L1104.0 84.5 L1110.0 84.6 L1116.0 84.7 L1122.0 84.9 L1128.0 85.1 L1134.0 85.2 L1140.0 85.4 L1146.0 85.6 L1152.0 85.8 L1158.0 86.1 L1164.0 86.3 L1170.0 86.5 L1176.0 86.8 L1182.0 87.0 L1188.0 87.3 L1191.0 87.4" stroke="#4a88f0" stroke-opacity="0.38" stroke-width="0.8" fill="none"/>
<path d="M690.0 134.8 L696.0 134.8 L702.0 134.2 L708.0 132.4 L714.0 130.6 L720.0 128.9 L726.0 127.2 L732.0 125.6 L738.0 124.0 L744.0 122.4 L750.0 120.9 L756.0 119.4 L762.0 117.9 L768.0 116.5 L774.0 115.1 L780.0 113.8 L786.0 112.5 L792.0 111.2 L798.0 110.0 L804.0 108.8 L810.0 107.7 L816.0 106.6 L822.0 105.5 L828.0 104.5 L834.0 103.4 L840.0 102.5 L846.0 101.5 L852.0 100.6 L858.0 99.7 L864.0 98.9 L870.0 98.1 L876.0 97.3 L882.0 96.6 L888.0 95.9 L894.0 95.2 L900.0 94.5 L906.0 93.9 L912.0 93.3 L918.0 92.8 L924.0 92.2 L930.0 91.7 L936.0 91.2 L942.0 90.8 L948.0 90.4 L954.0 90.0 L960.0 89.6 L966.0 89.3 L972.0 89.0 L978.0 88.7 L984.0 88.4 L990.0 88.2 L996.0 88.0 L1002.0 87.8 L1008.0 87.6 L1014.0 87.5 L1020.0 87.4 L1026.0 87.3 L1032.0 87.2 L1038.0 87.1 L1044.0 87.1 L1050.0 87.1 L1056.0 87.1 L1062.0 87.1 L1068.0 87.2 L1074.0 87.2 L1080.0 87.3 L1086.0 87.4 L1092.0 87.5 L1098.0 87.7 L1104.0 87.8 L1110.0 88.0 L1116.0 88.1 L1122.0 88.3 L1128.0 88.5 L1134.0 88.7 L1140.0 89.0 L1146.0 89.2 L1152.0 89.4 L1158.0 89.7 L1164.0 89.9 L1170.0 90.2 L1176.0 90.5 L1182.0 90.8 L1188.0 91.1 L1191.0 91.2" stroke="#4a88f0" stroke-opacity="0.38" stroke-width="0.8" fill="none"/>
<path d="M690.0 136.0 L696.0 136.0 L702.0 135.4 L708.0 133.6 L714.0 131.9 L720.0 130.2 L726.0 128.5 L732.0 126.9 L738.0 125.4 L744.0 123.8 L750.0 122.3 L756.0 120.9 L762.0 119.5 L768.0 118.1 L774.0 116.7 L780.0 115.4 L786.0 114.2 L792.0 112.9 L798.0 111.7 L804.0 110.6 L810.0 109.5 L816.0 108.4 L822.0 107.3 L828.0 106.3 L834.0 105.4 L840.0 104.4 L846.0 103.5 L852.0 102.6 L858.0 101.8 L864.0 101.0 L870.0 100.2 L876.0 99.4 L882.0 98.7 L888.0 98.1 L894.0 97.4 L900.0 96.8 L906.0 96.2 L912.0 95.6 L918.0 95.1 L924.0 94.6 L930.0 94.1 L936.0 93.7 L942.0 93.3 L948.0 92.9 L954.0 92.5 L960.0 92.2 L966.0 91.9 L972.0 91.6 L978.0 91.4 L984.0 91.1 L990.0 90.9 L996.0 90.7 L1002.0 90.6 L1008.0 90.5 L1014.0 90.3 L1020.0 90.3 L1026.0 90.2 L1032.0 90.2 L1038.0 90.1 L1044.0 90.1 L1050.0 90.1 L1056.0 90.2 L1062.0 90.2 L1068.0 90.3 L1074.0 90.4 L1080.0 90.5 L1086.0 90.7 L1092.0 90.8 L1098.0 91.0 L1104.0 91.1 L1110.0 91.3 L1116.0 91.5 L1122.0 91.8 L1128.0 92.0 L1134.0 92.2 L1140.0 92.5 L1146.0 92.8 L1152.0 93.0 L1158.0 93.3 L1164.0 93.6 L1170.0 93.9 L1176.0 94.2 L1182.0 94.5 L1188.0 94.8 L1191.0 95.0" stroke="#4a88f0" stroke-opacity="0.38" stroke-width="0.8" fill="none"/>
<path d="M690.0 137.2 L696.0 137.2 L702.0 136.6 L708.0 134.9 L714.0 133.2 L720.0 131.5 L726.0 129.9 L732.0 128.3 L738.0 126.8 L744.0 125.3 L750.0 123.8 L756.0 122.4 L762.0 121.0 L768.0 119.6 L774.0 118.3 L780.0 117.1 L786.0 115.8 L792.0 114.6 L798.0 113.5 L804.0 112.3 L810.0 111.3 L816.0 110.2 L822.0 109.2 L828.0 108.2 L834.0 107.3 L840.0 106.3 L846.0 105.5 L852.0 104.6 L858.0 103.8 L864.0 103.0 L870.0 102.3 L876.0 101.6 L882.0 100.9 L888.0 100.2 L894.0 99.6 L900.0 99.0 L906.0 98.5 L912.0 98.0 L918.0 97.5 L924.0 97.0 L930.0 96.6 L936.0 96.1 L942.0 95.8 L948.0 95.4 L954.0 95.1 L960.0 94.8 L966.0 94.5 L972.0 94.3 L978.0 94.0 L984.0 93.8 L990.0 93.7 L996.0 93.5 L1002.0 93.4 L1008.0 93.3 L1014.0 93.2 L1020.0 93.2 L1026.0 93.1 L1032.0 93.1 L1038.0 93.1 L1044.0 93.2 L1050.0 93.2 L1056.0 93.3 L1062.0 93.4 L1068.0 93.5 L1074.0 93.6 L1080.0 93.7 L1086.0 93.9 L1092.0 94.1 L1098.0 94.3 L1104.0 94.5 L1110.0 94.7 L1116.0 94.9 L1122.0 95.2 L1128.0 95.5 L1134.0 95.7 L1140.0 96.0 L1146.0 96.3 L1152.0 96.6 L1158.0 96.9 L1164.0 97.3 L1170.0 97.6 L1176.0 97.9 L1182.0 98.3 L1188.0 98.6 L1191.0 98.8" stroke="#4a88f0" stroke-opacity="0.38" stroke-width="0.8" fill="none"/>
<path d="M690.0 138.4 L696.0 138.4 L702.0 137.8 L708.0 136.1 L714.0 134.4 L720.0 132.8 L726.0 131.2 L732.0 129.7 L738.0 128.2 L744.0 126.7 L750.0 125.3 L756.0 123.9 L762.0 122.5 L768.0 121.2 L774.0 119.9 L780.0 118.7 L786.0 117.5 L792.0 116.3 L798.0 115.2 L804.0 114.1 L810.0 113.0 L816.0 112.0 L822.0 111.0 L828.0 110.1 L834.0 109.2 L840.0 108.3 L846.0 107.4 L852.0 106.6 L858.0 105.9 L864.0 105.1 L870.0 104.4 L876.0 103.7 L882.0 103.1 L888.0 102.4 L894.0 101.9 L900.0 101.3 L906.0 100.8 L912.0 100.3 L918.0 99.8 L924.0 99.4 L930.0 99.0 L936.0 98.6 L942.0 98.2 L948.0 97.9 L954.0 97.6 L960.0 97.4 L966.0 97.1 L972.0 96.9 L978.0 96.7 L984.0 96.5 L990.0 96.4 L996.0 96.3 L1002.0 96.2 L1008.0 96.1 L1014.0 96.1 L1020.0 96.0 L1026.0 96.0 L1032.0 96.1 L1038.0 96.1 L1044.0 96.2 L1050.0 96.3 L1056.0 96.4 L1062.0 96.5 L1068.0 96.6 L1074.0 96.8 L1080.0 96.9 L1086.0 97.1 L1092.0 97.4 L1098.0 97.6 L1104.0 97.8 L1110.0 98.1 L1116.0 98.3 L1122.0 98.6 L1128.0 98.9 L1134.0 99.2 L1140.0 99.5 L1146.0 99.9 L1152.0 100.2 L1158.0 100.6 L1164.0 100.9 L1170.0 101.3 L1176.0 101.7 L1182.0 102.0 L1188.0 102.4 L1191.0 102.6" stroke="#4a88f0" stroke-opacity="0.38" stroke-width="0.8" fill="none"/>
<path d="M690.0 139.6 L696.0 139.6 L702.0 139.0 L708.0 137.3 L714.0 135.7 L720.0 134.1 L726.0 132.6 L732.0 131.0 L738.0 129.6 L744.0 128.1 L750.0 126.7 L756.0 125.4 L762.0 124.0 L768.0 122.8 L774.0 121.5 L780.0 120.3 L786.0 119.1 L792.0 118.0 L798.0 116.9 L804.0 115.8 L810.0 114.8 L816.0 113.8 L822.0 112.9 L828.0 112.0 L834.0 111.1 L840.0 110.2 L846.0 109.4 L852.0 108.6 L858.0 107.9 L864.0 107.2 L870.0 106.5 L876.0 105.8 L882.0 105.2 L888.0 104.6 L894.0 104.1 L900.0 103.6 L906.0 103.1 L912.0 102.6 L918.0 102.2 L924.0 101.8 L930.0 101.4 L936.0 101.0 L942.0 100.7 L948.0 100.4 L954.0 100.2 L960.0 99.9 L966.0 99.7 L972.0 99.5 L978.0 99.4 L984.0 99.2 L990.0 99.1 L996.0 99.0 L1002.0 99.0 L1008.0 99.0 L1014.0 98.9 L1020.0 98.9 L1026.0 99.0 L1032.0 99.0 L1038.0 99.1 L1044.0 99.2 L1050.0 99.3 L1056.0 99.4 L1062.0 99.6 L1068.0 99.8 L1074.0 100.0 L1080.0 100.2 L1086.0 100.4 L1092.0 100.6 L1098.0 100.9 L1104.0 101.2 L1110.0 101.4 L1116.0 101.7 L1122.0 102.1 L1128.0 102.4 L1134.0 102.7 L1140.0 103.1 L1146.0 103.4 L1152.0 103.8 L1158.0 104.2 L1164.0 104.6 L1170.0 105.0 L1176.0 105.4 L1182.0 105.8 L1188.0 106.2 L1191.0 106.4" stroke="#4a88f0" stroke-opacity="0.38" stroke-width="0.8" fill="none"/>
<path d="M690.0 140.8 L696.0 140.8 L702.0 140.2 L708.0 138.6 L714.0 137.0 L720.0 135.4 L726.0 133.9 L732.0 132.4 L738.0 131.0 L744.0 129.6 L750.0 128.2 L756.0 126.9 L762.0 125.6 L768.0 124.3 L774.0 123.1 L780.0 121.9 L786.0 120.8 L792.0 119.7 L798.0 118.6 L804.0 117.6 L810.0 116.6 L816.0 115.6 L822.0 114.7 L828.0 113.8 L834.0 113.0 L840.0 112.2 L846.0 111.4 L852.0 110.6 L858.0 109.9 L864.0 109.2 L870.0 108.6 L876.0 108.0 L882.0 107.4 L888.0 106.8 L894.0 106.3 L900.0 105.8 L906.0 105.4 L912.0 104.9 L918.0 104.5 L924.0 104.2 L930.0 103.8 L936.0 103.5 L942.0 103.2 L948.0 102.9 L954.0 102.7 L960.0 102.5 L966.0 102.3 L972.0 102.2 L978.0 102.0 L984.0 101.9 L990.0 101.9 L996.0 101.8 L1002.0 101.8 L1008.0 101.8 L1014.0 101.8 L1020.0 101.8 L1026.0 101.9 L1032.0 102.0 L1038.0 102.1 L1044.0 102.2 L1050.0 102.4 L1056.0 102.5 L1062.0 102.7 L1068.0 102.9 L1074.0 103.1 L1080.0 103.4 L1086.0 103.6 L1092.0 103.9 L1098.0 104.2 L1104.0 104.5 L1110.0 104.8 L1116.0 105.1 L1122.0 105.5 L1128.0 105.9 L1134.0 106.2 L1140.0 106.6 L1146.0 107.0 L1152.0 107.4 L1158.0 107.8 L1164.0 108.2 L1170.0 108.7 L1176.0 109.1 L1182.0 109.5 L1188.0 110.0 L1191.0 110.2" stroke="#4a88f0" stroke-opacity="0.38" stroke-width="0.8" fill="none"/>
<path d="M690.0 142.0 L696.0 142.0 L702.0 141.5 L708.0 139.8 L714.0 138.3 L720.0 136.7 L726.0 135.2 L732.0 133.8 L738.0 132.4 L744.0 131.0 L750.0 129.6 L756.0 128.4 L762.0 127.1 L768.0 125.9 L774.0 124.7 L780.0 123.5 L786.0 122.4 L792.0 121.4 L798.0 120.3 L804.0 119.3 L810.0 118.4 L816.0 117.5 L822.0 116.6 L828.0 115.7 L834.0 114.9 L840.0 114.1 L846.0 113.4 L852.0 112.6 L858.0 112.0 L864.0 111.3 L870.0 110.7 L876.0 110.1 L882.0 109.6 L888.0 109.0 L894.0 108.5 L900.0 108.1 L906.0 107.7 L912.0 107.3 L918.0 106.9 L924.0 106.5 L930.0 106.2 L936.0 105.9 L942.0 105.7 L948.0 105.5 L954.0 105.3 L960.0 105.1 L966.0 104.9 L972.0 104.8 L978.0 104.7 L984.0 104.7 L990.0 104.6 L996.0 104.6 L1002.0 104.6 L1008.0 104.6 L1014.0 104.7 L1020.0 104.7 L1026.0 104.8 L1032.0 104.9 L1038.0 105.1 L1044.0 105.2 L1050.0 105.4 L1056.0 105.6 L1062.0 105.8 L1068.0 106.1 L1074.0 106.3 L1080.0 106.6 L1086.0 106.9 L1092.0 107.2 L1098.0 107.5 L1104.0 107.8 L1110.0 108.2 L1116.0 108.5 L1122.0 108.9 L1128.0 109.3 L1134.0 109.7 L1140.0 110.1 L1146.0 110.6 L1152.0 111.0 L1158.0 111.4 L1164.0 111.9 L1170.0 112.4 L1176.0 112.8 L1182.0 113.3 L1188.0 113.8 L1191.0 114.0" stroke="#4a88f0" stroke-opacity="0.38" stroke-width="0.8" fill="none"/>
</g>
<path d="M1000.0 106.0 L1005.0 101.2 L1010.0 97.8 L1015.0 94.7 L1020.0 91.9 L1025.0 89.2 L1030.0 86.6 L1035.0 84.2 L1040.0 81.8 L1045.0 79.4 L1050.0 77.2 L1055.0 74.9 L1060.0 72.8 L1065.0 70.6 L1070.0 68.5 L1075.0 66.4 L1080.0 64.4 L1085.0 62.4 L1090.0 60.4 L1095.0 58.4 L1100.0 56.5 L1105.0 54.6 L1110.0 52.7 L1115.0 50.8 L1120.0 48.9 L1125.0 47.1 L1130.0 45.3 L1135.0 43.4 L1140.0 41.6 L1145.0 39.9 L1150.0 38.1 L1155.0 36.3 L1160.0 34.6 L1165.0 32.8 L1170.0 31.1 L1175.0 29.4 L1180.0 27.7 L1185.0 26.0 L1190.0 24.3 L1191.0 24.0 L1191 120 L1000 120Z" fill="url(#bgC)"/>
<path d="M1000.0 106.0 L1005.0 101.2 L1010.0 97.8 L1015.0 94.7 L1020.0 91.9 L1025.0 89.2 L1030.0 86.6 L1035.0 84.2 L1040.0 81.8 L1045.0 79.4 L1050.0 77.2 L1055.0 74.9 L1060.0 72.8 L1065.0 70.6 L1070.0 68.5 L1075.0 66.4 L1080.0 64.4 L1085.0 62.4 L1090.0 60.4 L1095.0 58.4 L1100.0 56.5 L1105.0 54.6 L1110.0 52.7 L1115.0 50.8 L1120.0 48.9 L1125.0 47.1 L1130.0 45.3 L1135.0 43.4 L1140.0 41.6 L1145.0 39.9 L1150.0 38.1 L1155.0 36.3 L1160.0 34.6 L1165.0 32.8 L1170.0 31.1 L1175.0 29.4 L1180.0 27.7 L1185.0 26.0 L1190.0 24.3 L1191.0 24.0" stroke="#4a88f0" stroke-opacity="0.45" stroke-width="0.8" fill="none"/>
<path d="M1000.0 107.0 L1005.0 102.3 L1010.0 98.9 L1015.0 95.9 L1020.0 93.1 L1025.0 90.5 L1030.0 88.0 L1035.0 85.6 L1040.0 83.3 L1045.0 81.0 L1050.0 78.8 L1055.0 76.6 L1060.0 74.5 L1065.0 72.4 L1070.0 70.4 L1075.0 68.4 L1080.0 66.4 L1085.0 64.5 L1090.0 62.5 L1095.0 60.6 L1100.0 58.8 L1105.0 56.9 L1110.0 55.1 L1115.0 53.2 L1120.0 51.4 L1125.0 49.7 L1130.0 47.9 L1135.0 46.1 L1140.0 44.4 L1145.0 42.7 L1150.0 41.0 L1155.0 39.3 L1160.0 37.6 L1165.0 35.9 L1170.0 34.3 L1175.0 32.6 L1180.0 31.0 L1185.0 29.3 L1190.0 27.7 L1191.0 27.4" stroke="#4a88f0" stroke-opacity="0.45" stroke-width="0.8" fill="none"/>
<path d="M1000.0 108.0 L1005.0 103.3 L1010.0 100.0 L1015.0 97.1 L1020.0 94.4 L1025.0 91.8 L1030.0 89.4 L1035.0 87.1 L1040.0 84.8 L1045.0 82.6 L1050.0 80.4 L1055.0 78.3 L1060.0 76.3 L1065.0 74.3 L1070.0 72.3 L1075.0 70.3 L1080.0 68.4 L1085.0 66.5 L1090.0 64.7 L1095.0 62.8 L1100.0 61.0 L1105.0 59.2 L1110.0 57.4 L1115.0 55.7 L1120.0 54.0 L1125.0 52.2 L1130.0 50.5 L1135.0 48.8 L1140.0 47.2 L1145.0 45.5 L1150.0 43.9 L1155.0 42.2 L1160.0 40.6 L1165.0 39.0 L1170.0 37.4 L1175.0 35.8 L1180.0 34.2 L1185.0 32.7 L1190.0 31.1 L1191.0 30.8" stroke="#4a88f0" stroke-opacity="0.45" stroke-width="0.8" fill="none"/>
<path d="M1000.0 109.0 L1005.0 104.4 L1010.0 101.2 L1015.0 98.3 L1020.0 95.6 L1025.0 93.2 L1030.0 90.8 L1035.0 88.5 L1040.0 86.3 L1045.0 84.1 L1050.0 82.1 L1055.0 80.0 L1060.0 78.0 L1065.0 76.1 L1070.0 74.2 L1075.0 72.3 L1080.0 70.4 L1085.0 68.6 L1090.0 66.8 L1095.0 65.0 L1100.0 63.3 L1105.0 61.5 L1110.0 59.8 L1115.0 58.1 L1120.0 56.5 L1125.0 54.8 L1130.0 53.2 L1135.0 51.5 L1140.0 49.9 L1145.0 48.3 L1150.0 46.7 L1155.0 45.2 L1160.0 43.6 L1165.0 42.1 L1170.0 40.5 L1175.0 39.0 L1180.0 37.5 L1185.0 36.0 L1190.0 34.5 L1191.0 34.2" stroke="#4a88f0" stroke-opacity="0.45" stroke-width="0.8" fill="none"/>
<path d="M1000.0 110.0 L1005.0 105.5 L1010.0 102.3 L1015.0 99.5 L1020.0 96.9 L1025.0 94.5 L1030.0 92.2 L1035.0 89.9 L1040.0 87.8 L1045.0 85.7 L1050.0 83.7 L1055.0 81.7 L1060.0 79.8 L1065.0 77.9 L1070.0 76.0 L1075.0 74.2 L1080.0 72.4 L1085.0 70.7 L1090.0 68.9 L1095.0 67.2 L1100.0 65.5 L1105.0 63.9 L1110.0 62.2 L1115.0 60.6 L1120.0 59.0 L1125.0 57.4 L1130.0 55.8 L1135.0 54.2 L1140.0 52.7 L1145.0 51.1 L1150.0 49.6 L1155.0 48.1 L1160.0 46.6 L1165.0 45.1 L1170.0 43.7 L1175.0 42.2 L1180.0 40.8 L1185.0 39.3 L1190.0 37.9 L1191.0 37.6" stroke="#4a88f0" stroke-opacity="0.45" stroke-width="0.8" fill="none"/>
<path d="M1000.0 111.0 L1005.0 106.5 L1010.0 103.4 L1015.0 100.7 L1020.0 98.2 L1025.0 95.8 L1030.0 93.5 L1035.0 91.4 L1040.0 89.3 L1045.0 87.3 L1050.0 85.3 L1055.0 83.4 L1060.0 81.5 L1065.0 79.7 L1070.0 77.9 L1075.0 76.2 L1080.0 74.4 L1085.0 72.7 L1090.0 71.1 L1095.0 69.4 L1100.0 67.8 L1105.0 66.2 L1110.0 64.6 L1115.0 63.0 L1120.0 61.5 L1125.0 59.9 L1130.0 58.4 L1135.0 56.9 L1140.0 55.4 L1145.0 54.0 L1150.0 52.5 L1155.0 51.1 L1160.0 49.6 L1165.0 48.2 L1170.0 46.8 L1175.0 45.4 L1180.0 44.0 L1185.0 42.6 L1190.0 41.3 L1191.0 41.0" stroke="#4a88f0" stroke-opacity="0.45" stroke-width="0.8" fill="none"/>
<path d="M1000.0 112.0 L1005.0 107.6 L1010.0 104.5 L1015.0 101.9 L1020.0 99.4 L1025.0 97.1 L1030.0 94.9 L1035.0 92.8 L1040.0 90.8 L1045.0 88.8 L1050.0 86.9 L1055.0 85.1 L1060.0 83.3 L1065.0 81.5 L1070.0 79.8 L1075.0 78.1 L1080.0 76.4 L1085.0 74.8 L1090.0 73.2 L1095.0 71.6 L1100.0 70.0 L1105.0 68.5 L1110.0 67.0 L1115.0 65.5 L1120.0 64.0 L1125.0 62.5 L1130.0 61.1 L1135.0 59.6 L1140.0 58.2 L1145.0 56.8 L1150.0 55.4 L1155.0 54.0 L1160.0 52.6 L1165.0 51.3 L1170.0 49.9 L1175.0 48.6 L1180.0 47.3 L1185.0 46.0 L1190.0 44.7 L1191.0 44.4" stroke="#4a88f0" stroke-opacity="0.45" stroke-width="0.8" fill="none"/>
<path d="M1000.0 113.0 L1005.0 108.7 L1010.0 105.7 L1015.0 103.0 L1020.0 100.7 L1025.0 98.4 L1030.0 96.3 L1035.0 94.3 L1040.0 92.3 L1045.0 90.4 L1050.0 88.6 L1055.0 86.8 L1060.0 85.0 L1065.0 83.3 L1070.0 81.7 L1075.0 80.0 L1080.0 78.4 L1085.0 76.9 L1090.0 75.3 L1095.0 73.8 L1100.0 72.3 L1105.0 70.8 L1110.0 69.4 L1115.0 67.9 L1120.0 66.5 L1125.0 65.1 L1130.0 63.7 L1135.0 62.3 L1140.0 61.0 L1145.0 59.6 L1150.0 58.3 L1155.0 57.0 L1160.0 55.7 L1165.0 54.4 L1170.0 53.1 L1175.0 51.8 L1180.0 50.5 L1185.0 49.3 L1190.0 48.0 L1191.0 47.8" stroke="#4a88f0" stroke-opacity="0.45" stroke-width="0.8" fill="none"/>
<path d="M1000.0 114.0 L1005.0 109.7 L1010.0 106.8 L1015.0 104.2 L1020.0 101.9 L1025.0 99.7 L1030.0 97.7 L1035.0 95.7 L1040.0 93.8 L1045.0 92.0 L1050.0 90.2 L1055.0 88.5 L1060.0 86.8 L1065.0 85.2 L1070.0 83.6 L1075.0 82.0 L1080.0 80.4 L1085.0 78.9 L1090.0 77.5 L1095.0 76.0 L1100.0 74.6 L1105.0 73.1 L1110.0 71.7 L1115.0 70.4 L1120.0 69.0 L1125.0 67.7 L1130.0 66.3 L1135.0 65.0 L1140.0 63.7 L1145.0 62.4 L1150.0 61.2 L1155.0 59.9 L1160.0 58.7 L1165.0 57.4 L1170.0 56.2 L1175.0 55.0 L1180.0 53.8 L1185.0 52.6 L1190.0 51.4 L1191.0 51.2" stroke="#4a88f0" stroke-opacity="0.45" stroke-width="0.8" fill="none"/>
<path d="M1000.0 115.0 L1005.0 110.8 L1010.0 107.9 L1015.0 105.4 L1020.0 103.2 L1025.0 101.0 L1030.0 99.0 L1035.0 97.1 L1040.0 95.3 L1045.0 93.5 L1050.0 91.8 L1055.0 90.2 L1060.0 88.6 L1065.0 87.0 L1070.0 85.4 L1075.0 83.9 L1080.0 82.5 L1085.0 81.0 L1090.0 79.6 L1095.0 78.2 L1100.0 76.8 L1105.0 75.5 L1110.0 74.1 L1115.0 72.8 L1120.0 71.5 L1125.0 70.2 L1130.0 69.0 L1135.0 67.7 L1140.0 66.5 L1145.0 65.3 L1150.0 64.0 L1155.0 62.9 L1160.0 61.7 L1165.0 60.5 L1170.0 59.3 L1175.0 58.2 L1180.0 57.1 L1185.0 55.9 L1190.0 54.8 L1191.0 54.6" stroke="#4a88f0" stroke-opacity="0.45" stroke-width="0.8" fill="none"/>
<path d="M1000.0 116.0 L1005.0 111.8 L1010.0 109.0 L1015.0 106.6 L1020.0 104.4 L1025.0 102.4 L1030.0 100.4 L1035.0 98.6 L1040.0 96.8 L1045.0 95.1 L1050.0 93.5 L1055.0 91.9 L1060.0 90.3 L1065.0 88.8 L1070.0 87.3 L1075.0 85.9 L1080.0 84.5 L1085.0 83.1 L1090.0 81.7 L1095.0 80.4 L1100.0 79.1 L1105.0 77.8 L1110.0 76.5 L1115.0 75.2 L1120.0 74.0 L1125.0 72.8 L1130.0 71.6 L1135.0 70.4 L1140.0 69.2 L1145.0 68.1 L1150.0 66.9 L1155.0 65.8 L1160.0 64.7 L1165.0 63.6 L1170.0 62.5 L1175.0 61.4 L1180.0 60.3 L1185.0 59.3 L1190.0 58.2 L1191.0 58.0" stroke="#4a88f0" stroke-opacity="0.45" stroke-width="0.8" fill="none"/>
<path d="M1000.0 117.0 L1005.0 112.9 L1010.0 110.2 L1015.0 107.8 L1020.0 105.7 L1025.0 103.7 L1030.0 101.8 L1035.0 100.0 L1040.0 98.3 L1045.0 96.7 L1050.0 95.1 L1055.0 93.6 L1060.0 92.1 L1065.0 90.6 L1070.0 89.2 L1075.0 87.8 L1080.0 86.5 L1085.0 85.1 L1090.0 83.8 L1095.0 82.6 L1100.0 81.3 L1105.0 80.1 L1110.0 78.9 L1115.0 77.7 L1120.0 76.5 L1125.0 75.4 L1130.0 74.2 L1135.0 73.1 L1140.0 72.0 L1145.0 70.9 L1150.0 69.8 L1155.0 68.8 L1160.0 67.7 L1165.0 66.7 L1170.0 65.6 L1175.0 64.6 L1180.0 63.6 L1185.0 62.6 L1190.0 61.6 L1191.0 61.4" stroke="#4a88f0" stroke-opacity="0.45" stroke-width="0.8" fill="none"/>
<path d="M1000.0 118.0 L1005.0 114.0 L1010.0 111.3 L1015.0 109.0 L1020.0 106.9 L1025.0 105.0 L1030.0 103.2 L1035.0 101.5 L1040.0 99.8 L1045.0 98.2 L1050.0 96.7 L1055.0 95.2 L1060.0 93.8 L1065.0 92.4 L1070.0 91.1 L1075.0 89.8 L1080.0 88.5 L1085.0 87.2 L1090.0 86.0 L1095.0 84.8 L1100.0 83.6 L1105.0 82.4 L1110.0 81.3 L1115.0 80.1 L1120.0 79.0 L1125.0 77.9 L1130.0 76.9 L1135.0 75.8 L1140.0 74.8 L1145.0 73.7 L1150.0 72.7 L1155.0 71.7 L1160.0 70.7 L1165.0 69.7 L1170.0 68.8 L1175.0 67.8 L1180.0 66.8 L1185.0 65.9 L1190.0 65.0 L1191.0 64.8" stroke="#4a88f0" stroke-opacity="0.45" stroke-width="0.8" fill="none"/>
<path d="M1000.0 119.0 L1005.0 115.0 L1010.0 112.4 L1015.0 110.2 L1020.0 108.2 L1025.0 106.3 L1030.0 104.5 L1035.0 102.9 L1040.0 101.3 L1045.0 99.8 L1050.0 98.3 L1055.0 96.9 L1060.0 95.6 L1065.0 94.2 L1070.0 93.0 L1075.0 91.7 L1080.0 90.5 L1085.0 89.3 L1090.0 88.1 L1095.0 87.0 L1100.0 85.8 L1105.0 84.7 L1110.0 83.6 L1115.0 82.6 L1120.0 81.5 L1125.0 80.5 L1130.0 79.5 L1135.0 78.5 L1140.0 77.5 L1145.0 76.5 L1150.0 75.6 L1155.0 74.6 L1160.0 73.7 L1165.0 72.8 L1170.0 71.9 L1175.0 71.0 L1180.0 70.1 L1185.0 69.2 L1190.0 68.4 L1191.0 68.2" stroke="#4a88f0" stroke-opacity="0.45" stroke-width="0.8" fill="none"/>
<path d="M1000.0 120.0 L1005.0 116.1 L1010.0 113.5 L1015.0 111.4 L1020.0 109.4 L1025.0 107.6 L1030.0 105.9 L1035.0 104.3 L1040.0 102.8 L1045.0 101.4 L1050.0 100.0 L1055.0 98.6 L1060.0 97.3 L1065.0 96.1 L1070.0 94.8 L1075.0 93.6 L1080.0 92.5 L1085.0 91.3 L1090.0 90.2 L1095.0 89.2 L1100.0 88.1 L1105.0 87.1 L1110.0 86.0 L1115.0 85.0 L1120.0 84.0 L1125.0 83.1 L1130.0 82.1 L1135.0 81.2 L1140.0 80.3 L1145.0 79.4 L1150.0 78.5 L1155.0 77.6 L1160.0 76.7 L1165.0 75.9 L1170.0 75.0 L1175.0 74.2 L1180.0 73.4 L1185.0 72.6 L1190.0 71.8 L1191.0 71.6" stroke="#4a88f0" stroke-opacity="0.45" stroke-width="0.8" fill="none"/>
<path d="M1000.0 121.0 L1005.0 117.2 L1010.0 114.7 L1015.0 112.6 L1020.0 110.7 L1025.0 108.9 L1030.0 107.3 L1035.0 105.8 L1040.0 104.3 L1045.0 102.9 L1050.0 101.6 L1055.0 100.3 L1060.0 99.1 L1065.0 97.9 L1070.0 96.7 L1075.0 95.6 L1080.0 94.5 L1085.0 93.4 L1090.0 92.4 L1095.0 91.3 L1100.0 90.3 L1105.0 89.4 L1110.0 88.4 L1115.0 87.5 L1120.0 86.6 L1125.0 85.6 L1130.0 84.8 L1135.0 83.9 L1140.0 83.0 L1145.0 82.2 L1150.0 81.4 L1155.0 80.5 L1160.0 79.7 L1165.0 78.9 L1170.0 78.2 L1175.0 77.4 L1180.0 76.6 L1185.0 75.9 L1190.0 75.1 L1191.0 75.0" stroke="#4a88f0" stroke-opacity="0.45" stroke-width="0.8" fill="none"/>
<path d="M1000.0 122.0 L1005.0 118.2 L1010.0 115.8 L1015.0 113.7 L1020.0 111.9 L1025.0 110.2 L1030.0 108.7 L1035.0 107.2 L1040.0 105.8 L1045.0 104.5 L1050.0 103.2 L1055.0 102.0 L1060.0 100.8 L1065.0 99.7 L1070.0 98.6 L1075.0 97.5 L1080.0 96.5 L1085.0 95.5 L1090.0 94.5 L1095.0 93.5 L1100.0 92.6 L1105.0 91.7 L1110.0 90.8 L1115.0 89.9 L1120.0 89.1 L1125.0 88.2 L1130.0 87.4 L1135.0 86.6 L1140.0 85.8 L1145.0 85.0 L1150.0 84.2 L1155.0 83.5 L1160.0 82.7 L1165.0 82.0 L1170.0 81.3 L1175.0 80.6 L1180.0 79.9 L1185.0 79.2 L1190.0 78.5 L1191.0 78.4" stroke="#4a88f0" stroke-opacity="0.45" stroke-width="0.8" fill="none"/>
<path d="M1000.0 123.0 L1005.0 119.3 L1010.0 116.9 L1015.0 114.9 L1020.0 113.2 L1025.0 111.6 L1030.0 110.1 L1035.0 108.7 L1040.0 107.3 L1045.0 106.1 L1050.0 104.9 L1055.0 103.7 L1060.0 102.6 L1065.0 101.5 L1070.0 100.5 L1075.0 99.5 L1080.0 98.5 L1085.0 97.6 L1090.0 96.6 L1095.0 95.7 L1100.0 94.9 L1105.0 94.0 L1110.0 93.2 L1115.0 92.4 L1120.0 91.6 L1125.0 90.8 L1130.0 90.0 L1135.0 89.3 L1140.0 88.5 L1145.0 87.8 L1150.0 87.1 L1155.0 86.4 L1160.0 85.8 L1165.0 85.1 L1170.0 84.4 L1175.0 83.8 L1180.0 83.2 L1185.0 82.5 L1190.0 81.9 L1191.0 81.8" stroke="#4a88f0" stroke-opacity="0.45" stroke-width="0.8" fill="none"/></g>
</svg>
<div class="abs bc">披露</div><svg style="position:absolute;left:67px;top:15px" width="9" height="14" viewBox="0 0 9 14"><path d="M1.6 1 L7.3 6.8 L1.6 12.6" fill="none" stroke="#f0f0f5" stroke-width="1.15"/></svg><div class="abs bc" style="left:85px">上市公司信息</div><svg style="position:absolute;left:177px;top:15px" width="9" height="14" viewBox="0 0 9 14"><path d="M1.6 1 L7.3 6.8 L1.6 12.6" fill="none" stroke="#f0f0f5" stroke-width="1.15"/></svg>
<div class="abs ttl">定期报告预约情况</div>
</div>
<div id="search"><div class="ph">代码 / 简称 / 关键词</div>
<svg style="position:absolute;left:536px;top:17px" width="26" height="26" viewBox="0 0 26 26"><circle cx="10.5" cy="10.5" r="9" fill="none" stroke="#c4262e" stroke-width="2"/><path d="M17 17 L24 24" stroke="#c4262e" stroke-width="2.2" stroke-linecap="round"/></svg>
</div>

<div class="abs side-h">上市公司信息</div>
<div class="hr1"></div>
<div class="abs nav">展开导航菜单</div>
<svg style="position:absolute;left:230px;top:257px" width="14" height="12" viewBox="0 0 14 12"><path d="M0.5 1 L6.7 6.4 L12.7 1 M0.5 5.3 L6.7 10.7 L12.7 5.3" fill="none" stroke="#0a5ad4" stroke-width="1.35"/></svg>

<div class="abs lbl" style="top:317px">证券代码或简称</div>
<div class="box" style="top:341px"><div class="t">6位代码 / 简称</div>
<svg style="position:absolute;left:185px;top:8px" width="20" height="20" viewBox="0 0 20 20"><circle cx="8" cy="8" r="6.6" fill="none" stroke="#0a57cc" stroke-width="1.35"/><path d="M12.6 12.6 L17.6 17.6" stroke="#0a57cc" stroke-width="2.1" stroke-linecap="round"/></svg>
</div>
<div class="abs lbl" style="top:395px">报告类型</div>
<div class="box" style="top:420px"><div class="t" style="color:#707070">2025年年报</div>
<svg style="position:absolute;left:184px;top:13px" width="18" height="12" viewBox="0 0 18 12"><path d="M1.8 1.6 H15.8 L8.8 10.2 Z" fill="none" stroke="#0a57cc" stroke-width="1.55" stroke-linejoin="round"/></svg>
</div>
<div class="abs lbl" style="top:474px">实际披露日</div>
<div class="box" style="top:499px"><div class="t">实际披露日</div>
<svg style="position:absolute;left:185px;top:8px" width="20" height="20" viewBox="0 0 20 20"><rect x="1.4" y="2.4" width="17.2" height="16.4" rx="2" fill="none" stroke="#0a57cc" stroke-width="1.25"/><path d="M1.5 6 H18.5" stroke="#3a78d0" stroke-width="1.6"/><path d="M4.6 1 V2.4 M14.6 1 V2.4" stroke="#0a57cc" stroke-width="1"/><circle cx="5" cy="13.5" r="1.05" fill="#0a4fc0"/><circle cx="8.3" cy="13.5" r="1.05" fill="#0a4fc0"/><circle cx="11" cy="10.3" r="1.05" fill="#0a4fc0"/><circle cx="14.3" cy="10.3" r="1.05" fill="#0a4fc0"/></svg>
</div>

<svg style="position:absolute;left:32px;top:571px" width="88" height="86" viewBox="0 0 37 37" preserveAspectRatio="none" shape-rendering="crispEdges"><path d="M0 0h7v1h-7zM11 0h3v1h-3zM16 0h3v1h-3zM21 0h1v1h-1zM23 0h1v1h-1zM25 0h2v1h-2zM28 0h1v1h-1zM30 0h7v1h-7zM0 1h1v1h-1zM6 1h1v1h-1zM8 1h2v1h-2zM11 1h1v1h-1zM13 1h2v1h-2zM16 1h3v1h-3zM20 1h1v1h-1zM22 1h1v1h-1zM25 1h1v1h-1zM27 1h1v1h-1zM30 1h1v1h-1zM36 1h1v1h-1zM0 2h1v1h-1zM2 2h3v1h-3zM6 2h1v1h-1zM8 2h1v1h-1zM10 2h2v1h-2zM14 2h1v1h-1zM17 2h5v1h-5zM24 2h2v1h-2zM28 2h1v1h-1zM30 2h1v1h-1zM32 2h3v1h-3zM36 2h1v1h-1zM0 3h1v1h-1zM2 3h3v1h-3zM6 3h1v1h-1zM8 3h2v1h-2zM11 3h2v1h-2zM16 3h2v1h-2zM19 3h5v1h-5zM27 3h2v1h-2zM30 3h1v1h-1zM32 3h3v1h-3zM36 3h1v1h-1zM0 4h1v1h-1zM2 4h3v1h-3zM6 4h1v1h-1zM8 4h1v1h-1zM12 4h1v1h-1zM14 4h1v1h-1zM16 4h1v1h-1zM20 4h1v1h-1zM24 4h1v1h-1zM30 4h1v1h-1zM32 4h3v1h-3zM36 4h1v1h-1zM0 5h1v1h-1zM6 5h1v1h-1zM11 5h3v1h-3zM15 5h1v1h-1zM18 5h11v1h-11zM30 5h1v1h-1zM36 5h1v1h-1zM0 6h7v1h-7zM8 6h1v1h-1zM10 6h1v1h-1zM12 6h1v1h-1zM14 6h1v1h-1zM16 6h1v1h-1zM18 6h1v1h-1zM20 6h1v1h-1zM22 6h1v1h-1zM24 6h1v1h-1zM26 6h1v1h-1zM28 6h1v1h-1zM30 6h7v1h-7zM8 7h4v1h-4zM13 7h2v1h-2zM17 7h1v1h-1zM19 7h1v1h-1zM22 7h3v1h-3zM26 7h1v1h-1zM28 7h1v1h-1zM0 8h1v1h-1zM2 8h2v1h-2zM6 8h3v1h-3zM12 8h1v1h-1zM14 8h1v1h-1zM18 8h1v1h-1zM20 8h2v1h-2zM23 8h2v1h-2zM26 8h1v1h-1zM29 8h2v1h-2zM33 8h2v1h-2zM36 8h1v1h-1zM0 9h2v1h-2zM4 9h2v1h-2zM9 9h1v1h-1zM14 9h1v1h-1zM16 9h1v1h-1zM20 9h2v1h-2zM23 9h1v1h-1zM25 9h2v1h-2zM28 9h5v1h-5zM36 9h1v1h-1zM0 10h2v1h-2zM3 10h1v1h-1zM5 10h2v1h-2zM8 10h1v1h-1zM14 10h1v1h-1zM16 10h1v1h-1zM19 10h3v1h-3zM23 10h1v1h-1zM26 10h1v1h-1zM28 10h2v1h-2zM31 10h1v1h-1zM33 10h2v1h-2zM36 10h1v1h-1zM1 11h2v1h-2zM5 11h1v1h-1zM10 11h1v1h-1zM12 11h3v1h-3zM16 11h3v1h-3zM22 11h1v1h-1zM28 11h5v1h-5zM34 11h1v1h-1zM36 11h1v1h-1zM0 12h1v1h-1zM3 12h7v1h-7zM11 12h8v1h-8zM20 12h1v1h-1zM24 12h1v1h-1zM26 12h1v1h-1zM28 12h1v1h-1zM31 12h6v1h-6zM1 13h4v1h-4zM7 13h2v1h-2zM12 13h1v1h-1zM14 13h2v1h-2zM17 13h2v1h-2zM22 13h3v1h-3zM26 13h1v1h-1zM28 13h9v1h-9zM0 14h1v1h-1zM2 14h1v1h-1zM4 14h1v1h-1zM6 14h3v1h-3zM13 14h1v1h-1zM23 14h1v1h-1zM25 14h4v1h-4zM31 14h6v1h-6zM1 15h2v1h-2zM4 15h2v1h-2zM7 15h4v1h-4zM23 15h1v1h-1zM25 15h5v1h-5zM31 15h2v1h-2zM35 15h2v1h-2zM0 16h2v1h-2zM5 16h5v1h-5zM13 16h1v1h-1zM23 16h3v1h-3zM31 16h1v1h-1zM33 16h2v1h-2zM36 16h1v1h-1zM1 17h1v1h-1zM3 17h3v1h-3zM8 17h1v1h-1zM10 17h3v1h-3zM23 17h1v1h-1zM26 17h1v1h-1zM28 17h1v1h-1zM33 17h2v1h-2zM0 18h7v1h-7zM8 18h1v1h-1zM23 18h1v1h-1zM27 18h1v1h-1zM29 18h1v1h-1zM31 18h1v1h-1zM3 19h1v1h-1zM9 19h4v1h-4zM24 19h3v1h-3zM29 19h1v1h-1zM32 19h2v1h-2zM1 20h2v1h-2zM5 20h2v1h-2zM9 20h3v1h-3zM24 20h1v1h-1zM28 20h1v1h-1zM31 20h6v1h-6zM1 21h1v1h-1zM11 21h3v1h-3zM23 21h1v1h-1zM25 21h1v1h-1zM27 21h1v1h-1zM30 21h1v1h-1zM33 21h4v1h-4zM2 22h3v1h-3zM6 22h1v1h-1zM8 22h2v1h-2zM12 22h2v1h-2zM24 22h2v1h-2zM27 22h1v1h-1zM29 22h5v1h-5zM35 22h2v1h-2zM1 23h4v1h-4zM8 23h2v1h-2zM11 23h1v1h-1zM16 23h2v1h-2zM19 23h1v1h-1zM23 23h1v1h-1zM27 23h1v1h-1zM29 23h1v1h-1zM32 23h5v1h-5zM1 24h6v1h-6zM8 24h2v1h-2zM13 24h2v1h-2zM17 24h4v1h-4zM22 24h1v1h-1zM24 24h1v1h-1zM28 24h2v1h-2zM31 24h3v1h-3zM36 24h1v1h-1zM1 25h1v1h-1zM4 25h2v1h-2zM7 25h1v1h-1zM9 25h1v1h-1zM13 25h1v1h-1zM15 25h6v1h-6zM23 25h1v1h-1zM29 25h2v1h-2zM32 25h2v1h-2zM36 25h1v1h-1zM1 26h1v1h-1zM4 26h3v1h-3zM8 26h6v1h-6zM15 26h2v1h-2zM19 26h1v1h-1zM22 26h1v1h-1zM24 26h2v1h-2zM27 26h1v1h-1zM29 26h3v1h-3zM34 26h2v1h-2zM0 27h1v1h-1zM2 27h1v1h-1zM4 27h1v1h-1zM8 27h1v1h-1zM10 27h2v1h-2zM13 27h3v1h-3zM19 27h1v1h-1zM22 27h1v1h-1zM24 27h3v1h-3zM30 27h4v1h-4zM35 27h2v1h-2zM0 28h3v1h-3zM5 28h3v1h-3zM9 28h1v1h-1zM12 28h3v1h-3zM19 28h1v1h-1zM22 28h4v1h-4zM27 28h8v1h-8zM8 29h3v1h-3zM12 29h1v1h-1zM14 29h3v1h-3zM21 29h4v1h-4zM26 29h3v1h-3zM32 29h1v1h-1zM34 29h1v1h-1zM36 29h1v1h-1zM0 30h7v1h-7zM10 30h1v1h-1zM13 30h1v1h-1zM16 30h2v1h-2zM19 30h2v1h-2zM24 30h1v1h-1zM26 30h3v1h-3zM30 30h1v1h-1zM32 30h1v1h-1zM34 30h1v1h-1zM36 30h1v1h-1zM0 31h1v1h-1zM6 31h1v1h-1zM9 31h3v1h-3zM13 31h1v1h-1zM15 31h1v1h-1zM18 31h1v1h-1zM21 31h2v1h-2zM24 31h3v1h-3zM28 31h1v1h-1zM32 31h1v1h-1zM34 31h1v1h-1zM0 32h1v1h-1zM2 32h3v1h-3zM6 32h1v1h-1zM9 32h3v1h-3zM15 32h1v1h-1zM17 32h3v1h-3zM22 32h1v1h-1zM25 32h1v1h-1zM27 32h6v1h-6zM34 32h2v1h-2zM0 33h1v1h-1zM2 33h3v1h-3zM6 33h1v1h-1zM8 33h3v1h-3zM12 33h3v1h-3zM16 33h1v1h-1zM18 33h1v1h-1zM27 33h1v1h-1zM30 33h7v1h-7zM0 34h1v1h-1zM2 34h3v1h-3zM6 34h1v1h-1zM9 34h6v1h-6zM23 34h1v1h-1zM28 34h4v1h-4zM34 34h1v1h-1zM0 35h1v1h-1zM6 35h1v1h-1zM8 35h3v1h-3zM14 35h1v1h-1zM16 35h4v1h-4zM22 35h1v1h-1zM24 35h1v1h-1zM28 35h3v1h-3zM32 35h2v1h-2zM35 35h1v1h-1zM0 36h7v1h-7zM9 36h1v1h-1zM11 36h1v1h-1zM13 36h1v1h-1zM17 36h1v1h-1zM19 36h6v1h-6zM26 36h4v1h-4zM31 36h3v1h-3zM35 36h2v1h-2z" fill="#000"/></svg><div style="position:absolute;left:65px;top:603px;width:22px;height:22px;background:#e9f1f7;border-radius:2px"></div><svg style="position:absolute;left:65px;top:603px" width="22" height="22" viewBox="0 0 22 22"><circle cx="11.5" cy="8" r="7.2" fill="#d8161b"/><path d="M6 10 Q9 5 14 5 M7 12 Q11 7 17 7 M9 13 Q13 9 18 9.5" stroke="#fff" stroke-width="0.9" fill="none"/><rect x="5" y="17.5" width="12" height="1.5" fill="#7d8aa0"/></svg>
<svg style="position:absolute;left:158px;top:572px" width="84" height="84" viewBox="0 0 45 45" preserveAspectRatio="none" shape-rendering="crispEdges"><defs><linearGradient id="qg" x1="0" y1="0" x2="1" y2="1"><stop offset="0" stop-color="#62b2f4"/><stop offset="0.5" stop-color="#4e88d8"/><stop offset="1" stop-color="#1234c4"/></linearGradient></defs><path d="M0 0h7v1h-7zM9 0h3v1h-3zM13 0h1v1h-1zM15 0h3v1h-3zM22 0h4v1h-4zM27 0h2v1h-2zM30 0h1v1h-1zM32 0h1v1h-1zM34 0h3v1h-3zM38 0h7v1h-7zM0 1h1v1h-1zM6 1h1v1h-1zM9 1h4v1h-4zM14 1h3v1h-3zM19 1h2v1h-2zM23 1h1v1h-1zM27 1h3v1h-3zM31 1h1v1h-1zM33 1h3v1h-3zM38 1h1v1h-1zM44 1h1v1h-1zM0 2h1v1h-1zM2 2h3v1h-3zM6 2h1v1h-1zM8 2h1v1h-1zM11 2h1v1h-1zM13 2h7v1h-7zM23 2h2v1h-2zM28 2h2v1h-2zM34 2h1v1h-1zM38 2h1v1h-1zM40 2h3v1h-3zM44 2h1v1h-1zM0 3h1v1h-1zM2 3h3v1h-3zM6 3h1v1h-1zM8 3h6v1h-6zM16 3h1v1h-1zM18 3h6v1h-6zM26 3h1v1h-1zM31 3h3v1h-3zM35 3h1v1h-1zM38 3h1v1h-1zM40 3h3v1h-3zM44 3h1v1h-1zM0 4h1v1h-1zM2 4h3v1h-3zM6 4h1v1h-1zM8 4h1v1h-1zM12 4h1v1h-1zM15 4h2v1h-2zM18 4h3v1h-3zM23 4h1v1h-1zM25 4h1v1h-1zM27 4h1v1h-1zM29 4h6v1h-6zM38 4h1v1h-1zM40 4h3v1h-3zM44 4h1v1h-1zM0 5h1v1h-1zM6 5h1v1h-1zM11 5h1v1h-1zM13 5h1v1h-1zM18 5h5v1h-5zM24 5h2v1h-2zM28 5h2v1h-2zM32 5h2v1h-2zM36 5h1v1h-1zM38 5h1v1h-1zM44 5h1v1h-1zM0 6h7v1h-7zM8 6h1v1h-1zM10 6h1v1h-1zM12 6h1v1h-1zM14 6h1v1h-1zM16 6h1v1h-1zM18 6h1v1h-1zM20 6h1v1h-1zM22 6h1v1h-1zM24 6h1v1h-1zM26 6h1v1h-1zM28 6h1v1h-1zM30 6h1v1h-1zM32 6h1v1h-1zM34 6h1v1h-1zM36 6h1v1h-1zM38 6h7v1h-7zM8 7h1v1h-1zM10 7h4v1h-4zM16 7h2v1h-2zM20 7h5v1h-5zM27 7h2v1h-2zM31 7h1v1h-1zM35 7h1v1h-1zM0 8h1v1h-1zM5 8h2v1h-2zM11 8h1v1h-1zM15 8h2v1h-2zM21 8h1v1h-1zM25 8h1v1h-1zM31 8h4v1h-4zM37 8h4v1h-4zM42 8h1v1h-1zM44 8h1v1h-1zM0 9h1v1h-1zM5 9h1v1h-1zM7 9h1v1h-1zM12 9h5v1h-5zM18 9h2v1h-2zM26 9h3v1h-3zM33 9h2v1h-2zM37 9h3v1h-3zM41 9h3v1h-3zM4 10h3v1h-3zM9 10h1v1h-1zM12 10h2v1h-2zM15 10h1v1h-1zM17 10h1v1h-1zM19 10h4v1h-4zM24 10h1v1h-1zM26 10h1v1h-1zM28 10h4v1h-4zM33 10h2v1h-2zM37 10h1v1h-1zM40 10h1v1h-1zM43 10h1v1h-1zM1 11h2v1h-2zM5 11h1v1h-1zM7 11h1v1h-1zM9 11h1v1h-1zM11 11h2v1h-2zM15 11h3v1h-3zM19 11h6v1h-6zM27 11h2v1h-2zM30 11h2v1h-2zM33 11h1v1h-1zM36 11h2v1h-2zM39 11h2v1h-2zM0 12h3v1h-3zM4 12h1v1h-1zM6 12h2v1h-2zM11 12h1v1h-1zM13 12h1v1h-1zM18 12h2v1h-2zM22 12h1v1h-1zM24 12h4v1h-4zM30 12h3v1h-3zM34 12h3v1h-3zM38 12h1v1h-1zM41 12h1v1h-1zM43 12h2v1h-2zM0 13h4v1h-4zM5 13h1v1h-1zM7 13h2v1h-2zM10 13h1v1h-1zM12 13h1v1h-1zM14 13h1v1h-1zM17 13h2v1h-2zM22 13h2v1h-2zM26 13h1v1h-1zM32 13h1v1h-1zM34 13h2v1h-2zM37 13h2v1h-2zM40 13h2v1h-2zM5 14h2v1h-2zM10 14h1v1h-1zM12 14h7v1h-7zM20 14h1v1h-1zM22 14h1v1h-1zM24 14h2v1h-2zM27 14h2v1h-2zM30 14h2v1h-2zM35 14h1v1h-1zM37 14h1v1h-1zM40 14h2v1h-2zM43 14h1v1h-1zM1 15h1v1h-1zM3 15h3v1h-3zM7 15h2v1h-2zM10 15h1v1h-1zM16 15h1v1h-1zM18 15h1v1h-1zM20 15h4v1h-4zM28 15h4v1h-4zM34 15h1v1h-1zM37 15h1v1h-1zM40 15h1v1h-1zM0 16h1v1h-1zM2 16h1v1h-1zM4 16h1v1h-1zM6 16h1v1h-1zM9 16h3v1h-3zM14 16h1v1h-1zM17 16h1v1h-1zM19 16h1v1h-1zM21 16h2v1h-2zM24 16h2v1h-2zM27 16h2v1h-2zM30 16h5v1h-5zM36 16h1v1h-1zM38 16h6v1h-6zM1 17h1v1h-1zM4 17h1v1h-1zM11 17h1v1h-1zM16 17h1v1h-1zM28 17h1v1h-1zM30 17h1v1h-1zM37 17h3v1h-3zM42 17h1v1h-1zM44 17h1v1h-1zM0 18h4v1h-4zM6 18h1v1h-1zM9 18h1v1h-1zM12 18h5v1h-5zM30 18h1v1h-1zM33 18h1v1h-1zM36 18h2v1h-2zM39 18h4v1h-4zM0 19h2v1h-2zM3 19h1v1h-1zM5 19h1v1h-1zM7 19h5v1h-5zM15 19h2v1h-2zM33 19h1v1h-1zM35 19h1v1h-1zM38 19h3v1h-3zM42 19h1v1h-1zM1 20h2v1h-2zM5 20h2v1h-2zM9 20h2v1h-2zM12 20h2v1h-2zM32 20h1v1h-1zM35 20h1v1h-1zM37 20h1v1h-1zM40 20h5v1h-5zM0 21h1v1h-1zM2 21h1v1h-1zM8 21h2v1h-2zM11 21h1v1h-1zM16 21h1v1h-1zM29 21h1v1h-1zM34 21h1v1h-1zM36 21h1v1h-1zM38 21h1v1h-1zM40 21h1v1h-1zM42 21h3v1h-3zM1 22h1v1h-1zM5 22h2v1h-2zM9 22h2v1h-2zM12 22h2v1h-2zM16 22h1v1h-1zM29 22h3v1h-3zM34 22h1v1h-1zM37 22h1v1h-1zM40 22h1v1h-1zM42 22h3v1h-3zM1 23h3v1h-3zM5 23h1v1h-1zM7 23h1v1h-1zM10 23h1v1h-1zM14 23h1v1h-1zM16 23h1v1h-1zM28 23h1v1h-1zM30 23h1v1h-1zM33 23h2v1h-2zM37 23h2v1h-2zM40 23h4v1h-4zM0 24h2v1h-2zM3 24h2v1h-2zM6 24h1v1h-1zM8 24h1v1h-1zM14 24h1v1h-1zM16 24h1v1h-1zM32 24h1v1h-1zM36 24h1v1h-1zM38 24h3v1h-3zM42 24h1v1h-1zM44 24h1v1h-1zM0 25h1v1h-1zM3 25h1v1h-1zM5 25h1v1h-1zM7 25h3v1h-3zM11 25h1v1h-1zM13 25h1v1h-1zM16 25h1v1h-1zM29 25h4v1h-4zM34 25h1v1h-1zM36 25h2v1h-2zM39 25h1v1h-1zM41 25h1v1h-1zM44 25h1v1h-1zM0 26h1v1h-1zM3 26h1v1h-1zM6 26h1v1h-1zM8 26h2v1h-2zM13 26h1v1h-1zM15 26h1v1h-1zM28 26h1v1h-1zM31 26h3v1h-3zM35 26h1v1h-1zM37 26h5v1h-5zM43 26h2v1h-2zM1 27h5v1h-5zM8 27h2v1h-2zM11 27h1v1h-1zM13 27h1v1h-1zM28 27h3v1h-3zM33 27h2v1h-2zM36 27h4v1h-4zM44 27h1v1h-1zM0 28h1v1h-1zM3 28h2v1h-2zM6 28h1v1h-1zM10 28h2v1h-2zM13 28h1v1h-1zM15 28h1v1h-1zM17 28h3v1h-3zM22 28h1v1h-1zM24 28h1v1h-1zM28 28h2v1h-2zM32 28h1v1h-1zM34 28h4v1h-4zM42 28h2v1h-2zM0 29h2v1h-2zM3 29h1v1h-1zM7 29h2v1h-2zM11 29h2v1h-2zM14 29h1v1h-1zM17 29h2v1h-2zM22 29h2v1h-2zM25 29h3v1h-3zM29 29h6v1h-6zM36 29h1v1h-1zM38 29h1v1h-1zM40 29h1v1h-1zM43 29h2v1h-2zM1 30h1v1h-1zM6 30h6v1h-6zM13 30h1v1h-1zM15 30h1v1h-1zM17 30h1v1h-1zM19 30h1v1h-1zM21 30h1v1h-1zM23 30h1v1h-1zM25 30h1v1h-1zM28 30h1v1h-1zM31 30h3v1h-3zM35 30h1v1h-1zM38 30h1v1h-1zM40 30h2v1h-2zM43 30h1v1h-1zM1 31h1v1h-1zM3 31h1v1h-1zM5 31h1v1h-1zM8 31h2v1h-2zM17 31h1v1h-1zM19 31h1v1h-1zM25 31h6v1h-6zM32 31h1v1h-1zM36 31h3v1h-3zM41 31h2v1h-2zM44 31h1v1h-1zM1 32h1v1h-1zM3 32h1v1h-1zM6 32h3v1h-3zM10 32h2v1h-2zM15 32h3v1h-3zM19 32h4v1h-4zM24 32h3v1h-3zM28 32h2v1h-2zM32 32h3v1h-3zM36 32h2v1h-2zM40 32h2v1h-2zM43 32h2v1h-2zM0 33h1v1h-1zM2 33h2v1h-2zM5 33h1v1h-1zM9 33h1v1h-1zM14 33h2v1h-2zM17 33h1v1h-1zM19 33h1v1h-1zM22 33h1v1h-1zM24 33h2v1h-2zM27 33h2v1h-2zM30 33h1v1h-1zM32 33h1v1h-1zM34 33h1v1h-1zM38 33h1v1h-1zM42 33h2v1h-2zM0 34h2v1h-2zM4 34h1v1h-1zM6 34h1v1h-1zM8 34h2v1h-2zM12 34h2v1h-2zM15 34h3v1h-3zM19 34h1v1h-1zM21 34h1v1h-1zM24 34h1v1h-1zM27 34h1v1h-1zM29 34h1v1h-1zM32 34h3v1h-3zM36 34h1v1h-1zM40 34h2v1h-2zM43 34h2v1h-2zM2 35h4v1h-4zM7 35h1v1h-1zM9 35h2v1h-2zM14 35h3v1h-3zM19 35h5v1h-5zM27 35h2v1h-2zM30 35h1v1h-1zM33 35h2v1h-2zM36 35h1v1h-1zM38 35h2v1h-2zM41 35h1v1h-1zM0 36h2v1h-2zM3 36h1v1h-1zM5 36h2v1h-2zM10 36h1v1h-1zM15 36h2v1h-2zM22 36h1v1h-1zM25 36h2v1h-2zM29 36h1v1h-1zM32 36h1v1h-1zM36 36h5v1h-5zM8 37h1v1h-1zM10 37h5v1h-5zM16 37h4v1h-4zM21 37h1v1h-1zM27 37h4v1h-4zM32 37h3v1h-3zM36 37h1v1h-1zM40 37h1v1h-1zM44 37h1v1h-1zM0 38h7v1h-7zM8 38h1v1h-1zM12 38h4v1h-4zM17 38h2v1h-2zM22 38h3v1h-3zM26 38h2v1h-2zM34 38h1v1h-1zM36 38h1v1h-1zM38 38h1v1h-1zM40 38h4v1h-4zM0 39h1v1h-1zM6 39h1v1h-1zM9 39h2v1h-2zM12 39h6v1h-6zM22 39h1v1h-1zM24 39h5v1h-5zM30 39h1v1h-1zM34 39h1v1h-1zM36 39h1v1h-1zM40 39h2v1h-2zM0 40h1v1h-1zM2 40h3v1h-3zM6 40h1v1h-1zM8 40h4v1h-4zM13 40h1v1h-1zM18 40h2v1h-2zM21 40h1v1h-1zM23 40h2v1h-2zM27 40h3v1h-3zM31 40h1v1h-1zM36 40h8v1h-8zM0 41h1v1h-1zM2 41h3v1h-3zM6 41h1v1h-1zM8 41h1v1h-1zM10 41h1v1h-1zM14 41h1v1h-1zM16 41h3v1h-3zM20 41h1v1h-1zM25 41h4v1h-4zM31 41h1v1h-1zM35 41h6v1h-6zM42 41h2v1h-2zM0 42h1v1h-1zM2 42h3v1h-3zM6 42h1v1h-1zM8 42h1v1h-1zM14 42h5v1h-5zM20 42h1v1h-1zM22 42h1v1h-1zM24 42h3v1h-3zM28 42h1v1h-1zM30 42h1v1h-1zM32 42h1v1h-1zM35 42h1v1h-1zM39 42h2v1h-2zM43 42h1v1h-1zM0 43h1v1h-1zM6 43h1v1h-1zM10 43h1v1h-1zM13 43h5v1h-5zM19 43h1v1h-1zM21 43h1v1h-1zM24 43h1v1h-1zM28 43h1v1h-1zM30 43h4v1h-4zM35 43h1v1h-1zM37 43h1v1h-1zM40 43h5v1h-5zM0 44h7v1h-7zM9 44h1v1h-1zM11 44h1v1h-1zM14 44h2v1h-2zM17 44h7v1h-7zM27 44h1v1h-1zM31 44h3v1h-3zM37 44h1v1h-1zM39 44h1v1h-1zM41 44h1v1h-1z" fill="url(#qg)"/></svg><svg style="position:absolute;left:190px;top:603px" width="20" height="20" viewBox="0 0 20 20"><circle cx="10" cy="10" r="9.3" fill="#c9141a"/><path d="M2 12 Q6 6 11 8 T19 7 M2 14.5 Q7 9 12 10.5 T19 10" stroke="#fff" stroke-width="1.2" fill="none"/></svg>
<div class="abs qrl" style="left:46px">上交所发布</div>
<div class="abs qrl" style="left:158px">上交所移动App</div>

<div class="vline"></div>
<div class="abs ctitle">上市公司定期报告预约披露情况</div>
<div class="abs hint"><b>提示：</b>点击公司代码、首次预约日、变更日可进行排序</div>
<table>
<colgroup><col style="width:116px"><col style="width:116px"><col style="width:108px"><col style="width:108px"><col style="width:159px"><col style="width:159px"><col style="width:232px"></colgroup>
<tr><th>公司代码<svg class="ar" width="18" height="9" viewBox="0 0 18 9"><path d="M0 9 L4.8 0 L9.6 9Z" fill="#d2d2d2"/><path d="M8 0 L17.6 0 L12.8 9Z" fill="#d2d2d2"/></svg></th><th>公司简称</th><th>报告类型</th><th>报告年度</th><th>首次预约日<svg class="ar" width="18" height="9" viewBox="0 0 18 9"><path d="M0 9 L4.8 0 L9.6 9Z" fill="#0a57cc"/><path d="M8 0 L17.6 0 L12.8 9Z" fill="#d2d2d2"/></svg></th><th>一次变更日<svg class="ar" width="18" height="9" viewBox="0 0 18 9"><path d="M0 9 L4.8 0 L9.6 9Z" fill="#d2d2d2"/><path d="M8 0 L17.6 0 L12.8 9Z" fill="#d2d2d2"/></svg></th><th>二次变更日<svg class="ar" width="18" height="9" viewBox="0 0 18 9"><path d="M0 9 L4.8 0 L9.6 9Z" fill="#d2d2d2"/><path d="M8 0 L17.6 0 L12.8 9Z" fill="#d2d2d2"/></svg></th></tr>
<tr class=""><td class="c1"><span class="code">688230</span></td><td class="c2">芯导科技</td><td class="c3">年报</td><td class="c4">2025</td><td class="c5">2026-02-03</td><td class="c6">-</td><td class="c7">-</td></tr>
<tr class="g"><td class="c1"><span class="code">603007</span></td><td class="c2">*ST花王</td><td class="c3">年报</td><td class="c4">2025</td><td class="c5">2026-02-13</td><td class="c6">-</td><td class="c7">-</td></tr>
<tr class=""><td class="c1"><span class="code">603333</span></td><td class="c2">尚纬股份</td><td class="c3">年报</td><td class="c4">2025</td><td class="c5">2026-02-14</td><td class="c6">-</td><td class="c7">-</td></tr>
<tr class="g"><td class="c1"><span class="code">688082</span></td><td class="c2">盛美上海</td><td class="c3">年报</td><td class="c4">2025</td><td class="c5">2026-02-27</td><td class="c6">-</td><td class="c7">-</td></tr>
<tr class=""><td class="c1"><span class="code">688100</span></td><td class="c2">威胜信息</td><td class="c3">年报</td><td class="c4">2025</td><td class="c5">2026-02-28</td><td class="c6">-</td><td class="c7">-</td></tr>
<tr class="g"><td class="c1"><span class="code">603682</span></td><td class="c2">锦和商管</td><td class="c3">年报</td><td class="c4">2025</td><td class="c5">2026-02-28</td><td class="c6">-</td><td class="c7">-</td></tr>
<tr class=""><td class="c1"><span class="code">688511</span></td><td class="c2">*ST天微</td><td class="c3">年报</td><td class="c4">2025</td><td class="c5">2026-02-28</td><td class="c6">-</td><td class="c7">-</td></tr>
<tr class="g"><td class="c1"><span class="code">603659</span></td><td class="c2">璞泰来</td><td class="c3">年报</td><td class="c4">2025</td><td class="c5">2026-03-06</td><td class="c6">-</td><td class="c7">-</td></tr>
<tr class=""><td class="c1"><span class="code">600989</span></td><td class="c2">宝丰能源</td><td class="c3">年报</td><td class="c4">2025</td><td class="c5">2026-03-06</td><td class="c6">-</td><td class="c7">-</td></tr>
<tr class="g"><td class="c1"><span class="code">603316</span></td><td class="c2">诚邦股份</td><td class="c3">年报</td><td class="c4">2025</td><td class="c5">2026-03-06</td><td class="c6">-</td><td class="c7">-</td></tr>
<tr class=""><td class="c1"><span class="code">600529</span></td><td class="c2">山东药玻</td><td class="c3">年报</td><td class="c4">2025</td><td class="c5">2026-03-07</td><td class="c6">-</td><td class="c7">-</td></tr>
<tr class="g"><td class="c1"><span class="code">600000</span></td><td class="c2">浦发银行</td><td class="c3">年报</td><td class="c4">2025</td><td class="c5">2026-03-07</td><td class="c6">-</td><td class="c7">-</td></tr>

</table>
</body></html>
